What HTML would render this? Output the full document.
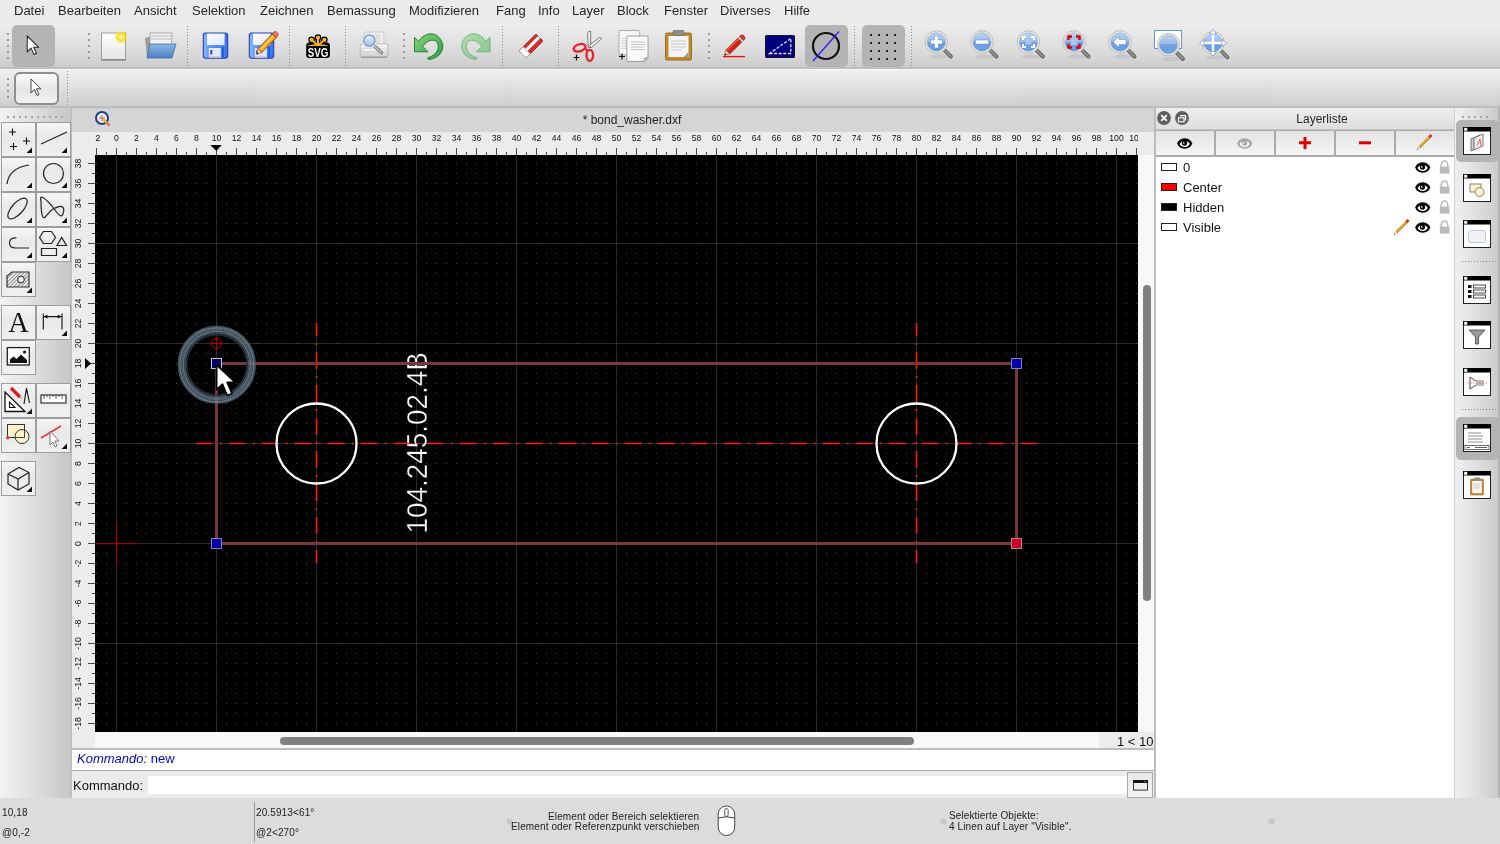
<!DOCTYPE html><html><head><meta charset="utf-8"><style>
html,body{margin:0;padding:0;}
body{width:1500px;height:844px;overflow:hidden;position:relative;background:#ececec;font-family:"Liberation Sans", sans-serif;}
.t{position:absolute;white-space:pre;line-height:1;will-change:transform;}
.b{position:absolute;display:block;}
svg.b{will-change:transform;}
</style></head><body>
<div class="b" style="left:0px;top:0px;width:1500px;height:24px;background:#ebebeb;"></div>
<div class="t" style="left:14.4px;top:4.2px;font-size:13px;color:#262626;">Datei</div>
<div class="t" style="left:57.6px;top:4.2px;font-size:13px;color:#262626;">Bearbeiten</div>
<div class="t" style="left:134.0px;top:4.2px;font-size:13px;color:#262626;">Ansicht</div>
<div class="t" style="left:191.7px;top:4.2px;font-size:13px;color:#262626;">Selektion</div>
<div class="t" style="left:259.6px;top:4.2px;font-size:13px;color:#262626;">Zeichnen</div>
<div class="t" style="left:327.2px;top:4.2px;font-size:13px;color:#262626;">Bemassung</div>
<div class="t" style="left:409.3px;top:4.2px;font-size:13px;color:#262626;">Modifizieren</div>
<div class="t" style="left:495.7px;top:4.2px;font-size:13px;color:#262626;">Fang</div>
<div class="t" style="left:537.6px;top:4.2px;font-size:13px;color:#262626;">Info</div>
<div class="t" style="left:572.0px;top:4.2px;font-size:13px;color:#262626;">Layer</div>
<div class="t" style="left:617.4px;top:4.2px;font-size:13px;color:#262626;">Block</div>
<div class="t" style="left:663.5px;top:4.2px;font-size:13px;color:#262626;">Fenster</div>
<div class="t" style="left:720.2px;top:4.2px;font-size:13px;color:#262626;">Diverses</div>
<div class="t" style="left:784.3px;top:4.2px;font-size:13px;color:#262626;">Hilfe</div>
<div class="b" style="left:0px;top:24px;width:1500px;height:44px;background:linear-gradient(#ededed,#d9d9d9 70%,#cbcbcb);"></div>
<div class="b" style="left:0px;top:67px;width:1500px;height:2px;background:#bebebe;"></div>
<div class="b" style="left:0px;top:69px;width:1500px;height:37px;background:linear-gradient(#f0f0f0,#dcdcdc 60%,#cfcfcf);"></div>
<div class="b" style="left:0px;top:69px;width:1500px;height:1px;background:#f7f7f7;"></div>
<div class="b" style="left:0px;top:106px;width:1500px;height:2px;background:#bdbdbd;"></div>
<svg class="b" style="left:7px;top:33px;" width="2" height="26" viewBox="0 0 2 26"><rect x="0" y="0.0" width="2" height="2" fill="#9a9a9a"/><rect x="0" y="6.0" width="2" height="2" fill="#9a9a9a"/><rect x="0" y="12.0" width="2" height="2" fill="#9a9a9a"/><rect x="0" y="18.0" width="2" height="2" fill="#9a9a9a"/><rect x="0" y="24.0" width="2" height="2" fill="#9a9a9a"/></svg>
<div class="b" style="left:12px;top:25px;width:43px;height:42px;background:#b4b4b4;border-radius:5px;"></div>
<svg class="b" style="left:26px;top:35px;" width="16" height="25" viewBox="0 0 16 25"><g transform="translate(1.2,0.8) scale(0.85)"><path d="M0,0 L0,19 L4.5,14.5 L8,22 L11,20.5 L7.5,13.5 L13.5,13.5 Z" fill="#fff" stroke="#222" stroke-width="1.2" stroke-linejoin="round"/></g></svg>
<svg class="b" style="left:88px;top:33px;" width="2" height="26" viewBox="0 0 2 26"><rect x="0" y="0.0" width="2" height="2" fill="#9a9a9a"/><rect x="0" y="6.0" width="2" height="2" fill="#9a9a9a"/><rect x="0" y="12.0" width="2" height="2" fill="#9a9a9a"/><rect x="0" y="18.0" width="2" height="2" fill="#9a9a9a"/><rect x="0" y="24.0" width="2" height="2" fill="#9a9a9a"/></svg>
<svg class="b" style="left:100px;top:31px;" width="28" height="31" viewBox="0 0 28 31"><defs><linearGradient id="nd" x1="0" y1="0" x2="0" y2="1"><stop offset="0" stop-color="#fff"/><stop offset="1" stop-color="#e4e4e4"/></linearGradient><radialGradient id="sun"><stop offset="0" stop-color="#fffbd0"/><stop offset="0.5" stop-color="#f3e21a"/><stop offset="1" stop-color="#f3e21a" stop-opacity="0"/></radialGradient></defs><rect x="1.5" y="2" width="24" height="27" fill="url(#nd)" stroke="#9c9c9c" stroke-width="1"/><rect x="1.5" y="28" width="24" height="1.5" fill="#888"/><circle cx="21" cy="6" r="7" fill="url(#sun)"/></svg>
<svg class="b" style="left:142px;top:30px;" width="36" height="32" viewBox="0 0 36 32"><defs><linearGradient id="fo" x1="0" y1="0" x2="0" y2="1"><stop offset="0" stop-color="#8fb7e8"/><stop offset="1" stop-color="#4a7fc4"/></linearGradient></defs><path d="M3,8 L12,6 L12,27 L5,27 Z" fill="#9a9a9a"/><path d="M8,3 L30,3 L29,22 L8,22 Z" fill="#f2f2f2" stroke="#9c9c9c" stroke-width="0.8"/><path d="M9,6 L29,6 M9,9 L29,9" stroke="#bbb" stroke-width="1"/><path d="M8,14 L34,14 L30,28 L5,28 Z" fill="url(#fo)" stroke="#3f6fb0" stroke-width="0.8"/></svg>
<svg class="b" style="left:187px;top:26px;" width="1" height="40" viewBox="0 0 1 40"><rect x="0" y="0" width="1" height="1" fill="#8a8a8a"/><rect x="0" y="3" width="1" height="1" fill="#8a8a8a"/><rect x="0" y="6" width="1" height="1" fill="#8a8a8a"/><rect x="0" y="9" width="1" height="1" fill="#8a8a8a"/><rect x="0" y="12" width="1" height="1" fill="#8a8a8a"/><rect x="0" y="15" width="1" height="1" fill="#8a8a8a"/><rect x="0" y="18" width="1" height="1" fill="#8a8a8a"/><rect x="0" y="21" width="1" height="1" fill="#8a8a8a"/><rect x="0" y="24" width="1" height="1" fill="#8a8a8a"/><rect x="0" y="27" width="1" height="1" fill="#8a8a8a"/><rect x="0" y="30" width="1" height="1" fill="#8a8a8a"/><rect x="0" y="33" width="1" height="1" fill="#8a8a8a"/><rect x="0" y="36" width="1" height="1" fill="#8a8a8a"/><rect x="0" y="39" width="1" height="1" fill="#8a8a8a"/></svg>
<svg class="b" style="left:202px;top:32px;" width="28" height="28" viewBox="0 0 28 28"><defs><linearGradient id="sv" x1="0" y1="0" x2="1" y2="0"><stop offset="0" stop-color="#8cbcff"/><stop offset="0.25" stop-color="#5c98f6"/><stop offset="1" stop-color="#3876ee"/></linearGradient><linearGradient id="svl" x1="0" y1="0" x2="1" y2="1"><stop offset="0" stop-color="#fafcff"/><stop offset="1" stop-color="#dfe7fb"/></linearGradient></defs><rect x="1.3" y="1" width="24.4" height="25.2" rx="2.5" fill="url(#sv)" stroke="#2c3da6" stroke-width="1.1"/><rect x="5" y="1.6" width="17.6" height="11.5" fill="url(#svl)"/><rect x="6.8" y="16" width="12" height="9.6" fill="#e4e6f0"/><rect x="6.8" y="24" width="12" height="1.6" fill="#c8cad8"/><rect x="8.3" y="18" width="2" height="4.5" fill="#1f4fd0"/><rect x="20" y="15" width="2" height="10" fill="#1f5fe8"/></svg>
<svg class="b" style="left:248px;top:32px;overflow:visible;" width="32" height="28" viewBox="0 0 32 28"><defs><linearGradient id="sv2" x1="0" y1="0" x2="1" y2="0"><stop offset="0" stop-color="#8cbcff"/><stop offset="0.25" stop-color="#5c98f6"/><stop offset="1" stop-color="#3876ee"/></linearGradient><linearGradient id="svl2" x1="0" y1="0" x2="1" y2="1"><stop offset="0" stop-color="#fafcff"/><stop offset="1" stop-color="#dfe7fb"/></linearGradient></defs><rect x="1.3" y="1" width="24.4" height="25.2" rx="2.5" fill="url(#sv2)" stroke="#2c3da6" stroke-width="1.1"/><rect x="5" y="1.6" width="17.6" height="11.5" fill="url(#svl2)"/><rect x="6.8" y="16" width="12" height="9.6" fill="#e4e6f0"/><rect x="6.8" y="24" width="12" height="1.6" fill="#c8cad8"/><rect x="8.3" y="18" width="2" height="4.5" fill="#1f4fd0"/><rect x="20" y="15" width="2" height="10" fill="#1f5fe8"/><g transform="translate(-1.2,-2.8)"><path d="M11.2,19.5 L25.5,4.6 L29.4,8.4 L15,23.3 Z" fill="#f8a81a" stroke="#9a2a10" stroke-width="0.8" stroke-linejoin="round"/><path d="M13.5,20.5 L27,6.5" stroke="#ffe070" stroke-width="1.2"/><path d="M25.5,4.6 L27.2,2.8 Q28.5,1.8 29.6,2.8 L31,4.2 Q31.8,5.4 30.9,6.6 L29.4,8.4 Z" fill="#f07a5a" stroke="#9a2a10" stroke-width="0.8"/><path d="M11.2,19.5 L9.6,24.6 L15,23.3 Z" fill="#f4e4c0" stroke="#9a2a10" stroke-width="0.6"/><path d="M9.6,24.6 L10.2,22.6 L11.8,24 Z" fill="#333"/></g></svg>
<svg class="b" style="left:289px;top:26px;" width="1" height="40" viewBox="0 0 1 40"><rect x="0" y="0" width="1" height="1" fill="#8a8a8a"/><rect x="0" y="3" width="1" height="1" fill="#8a8a8a"/><rect x="0" y="6" width="1" height="1" fill="#8a8a8a"/><rect x="0" y="9" width="1" height="1" fill="#8a8a8a"/><rect x="0" y="12" width="1" height="1" fill="#8a8a8a"/><rect x="0" y="15" width="1" height="1" fill="#8a8a8a"/><rect x="0" y="18" width="1" height="1" fill="#8a8a8a"/><rect x="0" y="21" width="1" height="1" fill="#8a8a8a"/><rect x="0" y="24" width="1" height="1" fill="#8a8a8a"/><rect x="0" y="27" width="1" height="1" fill="#8a8a8a"/><rect x="0" y="30" width="1" height="1" fill="#8a8a8a"/><rect x="0" y="33" width="1" height="1" fill="#8a8a8a"/><rect x="0" y="36" width="1" height="1" fill="#8a8a8a"/><rect x="0" y="39" width="1" height="1" fill="#8a8a8a"/></svg>
<svg class="b" style="left:300px;top:28px;" width="36" height="36" viewBox="0 0 36 36"><g fill="#000"><circle cx="18" cy="9.6" r="3.3"/><circle cx="11.6" cy="11.8" r="3.3"/><circle cx="24.4" cy="11.8" r="3.3"/></g><path d="M18,9.6 L18,17 M11.6,11.8 L17,17 M24.4,11.8 L19,17" stroke="#000" stroke-width="4"/><rect x="6.2" y="14.6" width="23.7" height="15.3" rx="3" fill="#000"/><g fill="#f8ae2e"><circle cx="18" cy="9.6" r="2.1"/><circle cx="11.6" cy="11.8" r="2.1"/><circle cx="24.4" cy="11.8" r="2.1"/></g><path d="M18,9.6 L18,17 M11.6,11.8 L17.5,17 M24.4,11.8 L18.5,17" stroke="#f8ae2e" stroke-width="2"/><path d="M8,17.4 Q18,15 28,17.4 L28,18 L8,18 Z" fill="#f8ae2e"/><text x="0" y="0" transform="translate(18.1,28.6) scale(0.78,1)" font-family="Liberation Sans" font-weight="bold" font-size="12.5" fill="#fff" text-anchor="middle">SVG</text></svg>
<svg class="b" style="left:345px;top:26px;" width="1" height="40" viewBox="0 0 1 40"><rect x="0" y="0" width="1" height="1" fill="#8a8a8a"/><rect x="0" y="3" width="1" height="1" fill="#8a8a8a"/><rect x="0" y="6" width="1" height="1" fill="#8a8a8a"/><rect x="0" y="9" width="1" height="1" fill="#8a8a8a"/><rect x="0" y="12" width="1" height="1" fill="#8a8a8a"/><rect x="0" y="15" width="1" height="1" fill="#8a8a8a"/><rect x="0" y="18" width="1" height="1" fill="#8a8a8a"/><rect x="0" y="21" width="1" height="1" fill="#8a8a8a"/><rect x="0" y="24" width="1" height="1" fill="#8a8a8a"/><rect x="0" y="27" width="1" height="1" fill="#8a8a8a"/><rect x="0" y="30" width="1" height="1" fill="#8a8a8a"/><rect x="0" y="33" width="1" height="1" fill="#8a8a8a"/><rect x="0" y="36" width="1" height="1" fill="#8a8a8a"/><rect x="0" y="39" width="1" height="1" fill="#8a8a8a"/></svg>
<svg class="b" style="left:354px;top:26px;" width="40" height="40" viewBox="0 0 40 40"><defs><linearGradient id="pr" x1="0" y1="0" x2="0" y2="1"><stop offset="0" stop-color="#fafafa"/><stop offset="1" stop-color="#cfcfcf"/></linearGradient><linearGradient id="pl" x1="0" y1="0" x2="0" y2="1"><stop offset="0" stop-color="#eef4fc"/><stop offset="1" stop-color="#9fbde6"/></linearGradient></defs><rect x="10.2" y="6" width="19.7" height="14" rx="1" fill="#ededed" stroke="#c6c6c6" stroke-width="0.8"/><rect x="13" y="8.5" width="13" height="8" fill="#dedede"/><rect x="6.2" y="17.8" width="27.7" height="13.5" rx="2.5" fill="url(#pr)" stroke="#aaaaaa" stroke-width="0.8"/><rect x="8" y="22.5" width="24" height="2.5" fill="#f6f6f6" stroke="#c8c8c8" stroke-width="0.5"/><rect x="7" y="30.5" width="26" height="1.5" fill="#8a8a8a" opacity="0.6"/><path d="M20.5,20 L27.5,26.8" stroke="#7a7a7a" stroke-width="3.4" stroke-linecap="round"/><path d="M20.5,20 L27.5,26.8" stroke="#c4c4c4" stroke-width="1.6" stroke-linecap="round"/><circle cx="15.4" cy="14.7" r="7.2" fill="#f6f6f6" stroke="#cfcfcf" stroke-width="0.6"/><circle cx="15.4" cy="14.7" r="5.6" fill="url(#pl)" stroke="#5a8ad0" stroke-width="1.1"/></svg>
<svg class="b" style="left:403px;top:33px;" width="2" height="26" viewBox="0 0 2 26"><rect x="0" y="0.0" width="2" height="2" fill="#9a9a9a"/><rect x="0" y="6.0" width="2" height="2" fill="#9a9a9a"/><rect x="0" y="12.0" width="2" height="2" fill="#9a9a9a"/><rect x="0" y="18.0" width="2" height="2" fill="#9a9a9a"/><rect x="0" y="24.0" width="2" height="2" fill="#9a9a9a"/></svg>
<svg class="b" style="left:408px;top:28px;" width="40" height="36" viewBox="0 0 40 36"><defs><linearGradient id="ug" x1="0" y1="0" x2="1" y2="1"><stop offset="0" stop-color="#8ad277"/><stop offset="1" stop-color="#2d9e44"/></linearGradient></defs><path d="M6.5,9.4 L6.5,23.8 L20,23.8 L14.6,18.4 C18,14 22,12 25,12.2 C29,12.5 30.5,16 30.2,19.5 C29.8,24 25,28.5 19.5,30 L20.5,31.5 C28,31 34.5,26 34.8,19 C35,11.5 29,5.8 23,5.8 C18,5.8 13.5,9 10.5,13.2 Z" fill="url(#ug)" stroke="#157a2c" stroke-width="0.9" stroke-linejoin="round"/></svg>
<svg class="b" style="left:455px;top:28px;" width="40" height="36" viewBox="0 0 40 36"><defs><linearGradient id="rg" x1="1" y1="0" x2="0" y2="1"><stop offset="0" stop-color="#b4dea8"/><stop offset="1" stop-color="#84c495"/></linearGradient></defs><g transform="translate(41.5,0) scale(-1,1)"><path d="M6.5,9.4 L6.5,23.8 L20,23.8 L14.6,18.4 C18,14 22,12 25,12.2 C29,12.5 30.5,16 30.2,19.5 C29.8,24 25,28.5 19.5,30 L20.5,31.5 C28,31 34.5,26 34.8,19 C35,11.5 29,5.8 23,5.8 C18,5.8 13.5,9 10.5,13.2 Z" fill="url(#rg)" stroke="#6aad80" stroke-width="0.9" stroke-linejoin="round"/></g></svg>
<svg class="b" style="left:502px;top:26px;" width="1" height="40" viewBox="0 0 1 40"><rect x="0" y="0" width="1" height="1" fill="#8a8a8a"/><rect x="0" y="3" width="1" height="1" fill="#8a8a8a"/><rect x="0" y="6" width="1" height="1" fill="#8a8a8a"/><rect x="0" y="9" width="1" height="1" fill="#8a8a8a"/><rect x="0" y="12" width="1" height="1" fill="#8a8a8a"/><rect x="0" y="15" width="1" height="1" fill="#8a8a8a"/><rect x="0" y="18" width="1" height="1" fill="#8a8a8a"/><rect x="0" y="21" width="1" height="1" fill="#8a8a8a"/><rect x="0" y="24" width="1" height="1" fill="#8a8a8a"/><rect x="0" y="27" width="1" height="1" fill="#8a8a8a"/><rect x="0" y="30" width="1" height="1" fill="#8a8a8a"/><rect x="0" y="33" width="1" height="1" fill="#8a8a8a"/><rect x="0" y="36" width="1" height="1" fill="#8a8a8a"/><rect x="0" y="39" width="1" height="1" fill="#8a8a8a"/></svg>
<svg class="b" style="left:516px;top:32px;" width="30" height="28" viewBox="0 0 30 28"><ellipse cx="15" cy="25" rx="11" ry="2" fill="#d8d8d8"/><g transform="rotate(-45 15 14)"><rect x="3" y="9" width="24" height="10" rx="1.5" fill="#d42c2c" stroke="#8a1a1a" stroke-width="0.8"/><rect x="3" y="12" width="24" height="3" fill="#fff"/><rect x="3" y="9" width="6" height="10" fill="#f4f4f4" stroke="#999" stroke-width="0.6"/></g></svg>
<svg class="b" style="left:558px;top:26px;" width="1" height="40" viewBox="0 0 1 40"><rect x="0" y="0" width="1" height="1" fill="#8a8a8a"/><rect x="0" y="3" width="1" height="1" fill="#8a8a8a"/><rect x="0" y="6" width="1" height="1" fill="#8a8a8a"/><rect x="0" y="9" width="1" height="1" fill="#8a8a8a"/><rect x="0" y="12" width="1" height="1" fill="#8a8a8a"/><rect x="0" y="15" width="1" height="1" fill="#8a8a8a"/><rect x="0" y="18" width="1" height="1" fill="#8a8a8a"/><rect x="0" y="21" width="1" height="1" fill="#8a8a8a"/><rect x="0" y="24" width="1" height="1" fill="#8a8a8a"/><rect x="0" y="27" width="1" height="1" fill="#8a8a8a"/><rect x="0" y="30" width="1" height="1" fill="#8a8a8a"/><rect x="0" y="33" width="1" height="1" fill="#8a8a8a"/><rect x="0" y="36" width="1" height="1" fill="#8a8a8a"/><rect x="0" y="39" width="1" height="1" fill="#8a8a8a"/></svg>
<svg class="b" style="left:571px;top:30px;" width="34" height="32" viewBox="0 0 34 32"><path d="M17.2,17.5 L16.6,3.2 Q17.2,0.9 19.6,1.1 L19.8,17.5 Z" fill="#f4f4f4" stroke="#5a5a5a" stroke-width="0.8"/><path d="M18.6,15.2 L28.6,7.4 Q30.2,7 30.4,8.8 L20.2,17.8 Z" fill="#f4f4f4" stroke="#5a5a5a" stroke-width="0.8"/><ellipse cx="8.6" cy="17.8" rx="6.2" ry="3.5" transform="rotate(-18 8.6 17.8)" fill="none" stroke="#e0262b" stroke-width="2.3"/><ellipse cx="18.8" cy="25.3" rx="3.3" ry="5.5" fill="none" stroke="#e0262b" stroke-width="2.3"/><path d="M14,18.6 L17,21" stroke="#e0262b" stroke-width="2.2"/><path d="M5.5,24.5 L5.5,30.5 M2.5,27.5 L8.5,27.5" stroke="#111" stroke-width="1.2"/></svg>
<svg class="b" style="left:617px;top:29px;" width="33" height="34" viewBox="0 0 33 34"><path d="M2,2.5 Q2,1.5 3,1.5 L21.5,1.5 Q22.7,1.5 22.7,2.7 L22.7,26 L2,26 Z" fill="#f6f6f6" stroke="#9a9a9a" stroke-width="0.8"/><path d="M4.5,9.5 L14,9.5 M4.5,12 L14,12 M4.5,14.5 L14,14.5 M4.5,17 L14,17 M4.5,19.5 L14,19.5" stroke="#cfcfcf" stroke-width="1"/><path d="M9.8,8 Q9.8,7 10.8,7 L30,7 Q31,7 31,8 L31,28.5 L27,32.5 L10.8,32.5 Q9.8,32.5 9.8,31.5 Z" fill="#f8f8f8" stroke="#8c8c8c" stroke-width="0.8"/><path d="M27,32.5 L27.5,28.8 L31,28.5 Z" fill="#c8c8c8" stroke="#8c8c8c" stroke-width="0.6"/><path d="M14,13 L28,13 M14,15.5 L28,15.5 M14,18 L27,18 M14,20.5 L28,20.5" stroke="#c4c4c4" stroke-width="1"/><path d="M5,24.5 L5,30.5 M2,27.5 L8,27.5" stroke="#111" stroke-width="1.2"/></svg>
<svg class="b" style="left:664px;top:29px;" width="30" height="33" viewBox="0 0 30 33"><rect x="1.5" y="4" width="26" height="27" rx="1.5" fill="#c28a2e" stroke="#8a5a10" stroke-width="0.8"/><rect x="4.5" y="7" width="20" height="21" fill="#f4f4f4"/><path d="M7,12 L22,12 M7,15 L22,15 M7,18 L22,18 M7,21 L18,21" stroke="#c9c9c9" stroke-width="1"/><rect x="9" y="1.5" width="11" height="5" rx="1" fill="#8e8e86" stroke="#666" stroke-width="0.6"/><path d="M24.5,23 L24.5,28 L19.5,28 Z" fill="#9c9c9c"/></svg>
<svg class="b" style="left:708px;top:33px;" width="2" height="26" viewBox="0 0 2 26"><rect x="0" y="0.0" width="2" height="2" fill="#9a9a9a"/><rect x="0" y="6.0" width="2" height="2" fill="#9a9a9a"/><rect x="0" y="12.0" width="2" height="2" fill="#9a9a9a"/><rect x="0" y="18.0" width="2" height="2" fill="#9a9a9a"/><rect x="0" y="24.0" width="2" height="2" fill="#9a9a9a"/></svg>
<svg class="b" style="left:716px;top:28px;" width="36" height="34" viewBox="0 0 36 34"><rect x="7" y="27.9" width="22" height="1.4" fill="#ff0a0a"/><g transform="translate(8.4,27.4) rotate(-44.7)"><path d="M0,0 L5,-2.8 L5,2.8 Z" fill="#f0caa0" stroke="#7a4a20" stroke-width="0.5"/><path d="M0,0 L1.9,-1.05 L1.9,1.05 Z" fill="#222"/><rect x="5" y="-2.8" width="17" height="5.6" fill="#d41e1e" stroke="#6a3a10" stroke-width="0.6"/><rect x="5.3" y="-2.5" width="16.5" height="1.7" fill="#e8582c"/><rect x="22" y="-2.8" width="1.9" height="5.6" fill="#cfcfcf"/><path d="M23.9,-2.8 L25.3,-2.8 Q27.7,-2.8 27.7,0 Q27.7,2.8 25.3,2.8 L23.9,2.8 Z" fill="#e83232" stroke="#6a3a10" stroke-width="0.6"/></g></svg>
<svg class="b" style="left:765px;top:35px;" width="30" height="23" viewBox="0 0 30 23"><rect x="0.6" y="0.6" width="28.8" height="21.8" rx="1" fill="#000080" stroke="#141428" stroke-width="1.2"/><path d="M4.5,18.5 L25.8,18.5 L25.8,3.5 Z" fill="none" stroke="#e0e0ff" stroke-width="1.3" stroke-dasharray="3 1.6"/></svg>
<div class="b" style="left:805px;top:25px;width:43px;height:42px;background:#b4b4b4;border-radius:5px;"></div>
<svg class="b" style="left:810px;top:30px;" width="34" height="34" viewBox="0 0 34 34"><circle cx="16" cy="16" r="13" fill="none" stroke="#111" stroke-width="2.2"/><path d="M3,31 L29,1.5" stroke="#2020ff" stroke-width="1.2"/></svg>
<svg class="b" style="left:854px;top:26px;" width="1" height="40" viewBox="0 0 1 40"><rect x="0" y="0" width="1" height="1" fill="#8a8a8a"/><rect x="0" y="3" width="1" height="1" fill="#8a8a8a"/><rect x="0" y="6" width="1" height="1" fill="#8a8a8a"/><rect x="0" y="9" width="1" height="1" fill="#8a8a8a"/><rect x="0" y="12" width="1" height="1" fill="#8a8a8a"/><rect x="0" y="15" width="1" height="1" fill="#8a8a8a"/><rect x="0" y="18" width="1" height="1" fill="#8a8a8a"/><rect x="0" y="21" width="1" height="1" fill="#8a8a8a"/><rect x="0" y="24" width="1" height="1" fill="#8a8a8a"/><rect x="0" y="27" width="1" height="1" fill="#8a8a8a"/><rect x="0" y="30" width="1" height="1" fill="#8a8a8a"/><rect x="0" y="33" width="1" height="1" fill="#8a8a8a"/><rect x="0" y="36" width="1" height="1" fill="#8a8a8a"/><rect x="0" y="39" width="1" height="1" fill="#8a8a8a"/></svg>
<div class="b" style="left:862px;top:25px;width:43px;height:42px;background:#b4b4b4;border-radius:5px;"></div>
<svg class="b" style="left:869px;top:33px;" width="28" height="28" viewBox="0 0 28 28"><rect x="1" y="1" width="2" height="2" fill="#222"/><rect x="1" y="9" width="2" height="2" fill="#222"/><rect x="1" y="17" width="2" height="2" fill="#222"/><rect x="1" y="25" width="2" height="2" fill="#222"/><rect x="9" y="1" width="2" height="2" fill="#222"/><rect x="9" y="9" width="2" height="2" fill="#222"/><rect x="9" y="17" width="2" height="2" fill="#222"/><rect x="9" y="25" width="2" height="2" fill="#222"/><rect x="17" y="1" width="2" height="2" fill="#222"/><rect x="17" y="9" width="2" height="2" fill="#222"/><rect x="17" y="17" width="2" height="2" fill="#222"/><rect x="17" y="25" width="2" height="2" fill="#222"/><rect x="25" y="1" width="2" height="2" fill="#222"/><rect x="25" y="9" width="2" height="2" fill="#222"/><rect x="25" y="17" width="2" height="2" fill="#222"/><rect x="25" y="25" width="2" height="2" fill="#222"/></svg>
<svg class="b" style="left:911px;top:26px;" width="1" height="40" viewBox="0 0 1 40"><rect x="0" y="0" width="1" height="1" fill="#8a8a8a"/><rect x="0" y="3" width="1" height="1" fill="#8a8a8a"/><rect x="0" y="6" width="1" height="1" fill="#8a8a8a"/><rect x="0" y="9" width="1" height="1" fill="#8a8a8a"/><rect x="0" y="12" width="1" height="1" fill="#8a8a8a"/><rect x="0" y="15" width="1" height="1" fill="#8a8a8a"/><rect x="0" y="18" width="1" height="1" fill="#8a8a8a"/><rect x="0" y="21" width="1" height="1" fill="#8a8a8a"/><rect x="0" y="24" width="1" height="1" fill="#8a8a8a"/><rect x="0" y="27" width="1" height="1" fill="#8a8a8a"/><rect x="0" y="30" width="1" height="1" fill="#8a8a8a"/><rect x="0" y="33" width="1" height="1" fill="#8a8a8a"/><rect x="0" y="36" width="1" height="1" fill="#8a8a8a"/><rect x="0" y="39" width="1" height="1" fill="#8a8a8a"/></svg>
<svg class="b" style="left:920px;top:26px;" width="40" height="40" viewBox="0 0 40 40"><defs><linearGradient id="mg16.416" x1="0" y1="0" x2="0" y2="1"><stop offset="0" stop-color="#bcd3f1"/><stop offset="0.47" stop-color="#9bbbe7"/><stop offset="0.53" stop-color="#6f9fe0"/><stop offset="1" stop-color="#66a0e8"/></linearGradient></defs><ellipse cx="19.4" cy="30.5" rx="10" ry="2.2" fill="#000" opacity="0.07"/><path d="M24.7,24.3 L30.9,30.5" stroke="#6a6a6a" stroke-width="4" stroke-linecap="round"/><path d="M24.7,24.3 L30.9,30.5" stroke="#9c9c9c" stroke-width="1.3" stroke-linecap="round"/><circle cx="16.4" cy="16" r="11.2" fill="#ececE6" stroke="#b0b0a6" stroke-width="0.8"/><circle cx="16.4" cy="16" r="9.2" fill="url(#mg16.416)" stroke="#8aa8d0" stroke-width="0.6"/><path d="M10.5,14 L14.5,14 L14.5,10 L18.5,10 L18.5,14 L22.5,14 L22.5,18 L18.5,18 L18.5,22 L14.5,22 L14.5,18 L10.5,18 Z" fill="#fff" stroke="#5a86c4" stroke-width="0.5"/></svg>
<svg class="b" style="left:966px;top:26px;" width="40" height="40" viewBox="0 0 40 40"><defs><linearGradient id="mg1616" x1="0" y1="0" x2="0" y2="1"><stop offset="0" stop-color="#bcd3f1"/><stop offset="0.47" stop-color="#9bbbe7"/><stop offset="0.53" stop-color="#6f9fe0"/><stop offset="1" stop-color="#66a0e8"/></linearGradient></defs><ellipse cx="19" cy="30.5" rx="10" ry="2.2" fill="#000" opacity="0.07"/><path d="M24.3,24.3 L30.5,30.5" stroke="#6a6a6a" stroke-width="4" stroke-linecap="round"/><path d="M24.3,24.3 L30.5,30.5" stroke="#9c9c9c" stroke-width="1.3" stroke-linecap="round"/><circle cx="16" cy="16" r="11.2" fill="#ececE6" stroke="#b0b0a6" stroke-width="0.8"/><circle cx="16" cy="16" r="9.2" fill="url(#mg1616)" stroke="#8aa8d0" stroke-width="0.6"/><rect x="9.5" y="14" width="13" height="4" fill="#fff" stroke="#5a86c4" stroke-width="0.5"/></svg>
<svg class="b" style="left:1012px;top:26px;" width="40" height="40" viewBox="0 0 40 40"><defs><linearGradient id="mg16.416" x1="0" y1="0" x2="0" y2="1"><stop offset="0" stop-color="#bcd3f1"/><stop offset="0.47" stop-color="#9bbbe7"/><stop offset="0.53" stop-color="#6f9fe0"/><stop offset="1" stop-color="#66a0e8"/></linearGradient></defs><ellipse cx="19.4" cy="30.5" rx="10" ry="2.2" fill="#000" opacity="0.07"/><path d="M24.7,24.3 L30.9,30.5" stroke="#6a6a6a" stroke-width="4" stroke-linecap="round"/><path d="M24.7,24.3 L30.9,30.5" stroke="#9c9c9c" stroke-width="1.3" stroke-linecap="round"/><circle cx="16.4" cy="16" r="11.2" fill="#ececE6" stroke="#b0b0a6" stroke-width="0.8"/><circle cx="16.4" cy="16" r="9.2" fill="url(#mg16.416)" stroke="#8aa8d0" stroke-width="0.6"/><path d="M11,14 L11,11 L14,11 M19,11 L22,11 L22,14 M22,18 L22,21 L19,21 M14,21 L11,21 L11,18" fill="none" stroke="#fff" stroke-width="2"/><rect x="13.5" y="13.5" width="6" height="5" fill="#a9c8ee"/></svg>
<svg class="b" style="left:1058px;top:26px;" width="40" height="40" viewBox="0 0 40 40"><defs><linearGradient id="mg1616" x1="0" y1="0" x2="0" y2="1"><stop offset="0" stop-color="#bcd3f1"/><stop offset="0.47" stop-color="#9bbbe7"/><stop offset="0.53" stop-color="#6f9fe0"/><stop offset="1" stop-color="#66a0e8"/></linearGradient></defs><ellipse cx="19" cy="30.5" rx="10" ry="2.2" fill="#000" opacity="0.07"/><path d="M24.3,24.3 L30.5,30.5" stroke="#6a6a6a" stroke-width="4" stroke-linecap="round"/><path d="M24.3,24.3 L30.5,30.5" stroke="#9c9c9c" stroke-width="1.3" stroke-linecap="round"/><circle cx="16" cy="16" r="11.2" fill="#ececE6" stroke="#b0b0a6" stroke-width="0.8"/><circle cx="16" cy="16" r="9.2" fill="url(#mg1616)" stroke="#8aa8d0" stroke-width="0.6"/><path d="M10.5,14 L10.5,10.5 L14,10.5 M18,10.5 L21.5,10.5 L21.5,14 M21.5,18 L21.5,21.5 L18,21.5 M14,21.5 L10.5,21.5 L10.5,18" fill="none" stroke="#e30000" stroke-width="2.4"/><rect x="13" y="13" width="6" height="6" fill="#a9c8ee"/></svg>
<svg class="b" style="left:1104px;top:26px;" width="40" height="40" viewBox="0 0 40 40"><defs><linearGradient id="mg1616" x1="0" y1="0" x2="0" y2="1"><stop offset="0" stop-color="#bcd3f1"/><stop offset="0.47" stop-color="#9bbbe7"/><stop offset="0.53" stop-color="#6f9fe0"/><stop offset="1" stop-color="#66a0e8"/></linearGradient></defs><ellipse cx="19" cy="30.5" rx="10" ry="2.2" fill="#000" opacity="0.07"/><path d="M24.3,24.3 L30.5,30.5" stroke="#6a6a6a" stroke-width="4" stroke-linecap="round"/><path d="M24.3,24.3 L30.5,30.5" stroke="#9c9c9c" stroke-width="1.3" stroke-linecap="round"/><circle cx="16" cy="16" r="11.2" fill="#ececE6" stroke="#b0b0a6" stroke-width="0.8"/><circle cx="16" cy="16" r="9.2" fill="url(#mg1616)" stroke="#8aa8d0" stroke-width="0.6"/><path d="M9,16 L15,10.5 L15,13.5 L22,13.5 L22,18.5 L15,18.5 L15,21.5 Z" fill="#fff" stroke="#5a86c4" stroke-width="0.5"/></svg>
<svg class="b" style="left:1150px;top:26px;" width="40" height="40" viewBox="0 0 40 40"><rect x="4.5" y="4.5" width="27" height="18" fill="#fff" stroke="#6a92cc" stroke-width="1"/><defs><linearGradient id="mg18.518.5" x1="0" y1="0" x2="0" y2="1"><stop offset="0" stop-color="#bcd3f1"/><stop offset="0.47" stop-color="#9bbbe7"/><stop offset="0.53" stop-color="#6f9fe0"/><stop offset="1" stop-color="#66a0e8"/></linearGradient></defs><ellipse cx="21.5" cy="33.0" rx="10" ry="2.2" fill="#000" opacity="0.07"/><path d="M26.8,26.8 L33.0,33.0" stroke="#6a6a6a" stroke-width="4" stroke-linecap="round"/><path d="M26.8,26.8 L33.0,33.0" stroke="#9c9c9c" stroke-width="1.3" stroke-linecap="round"/><circle cx="18.5" cy="18.5" r="11.2" fill="#ececE6" stroke="#b0b0a6" stroke-width="0.8"/><circle cx="18.5" cy="18.5" r="9.2" fill="url(#mg18.518.5)" stroke="#8aa8d0" stroke-width="0.6"/><rect x="10" y="18" width="17" height="3" fill="#7aa5dd" opacity="0.6"/></svg>
<svg class="b" style="left:1196px;top:26px;" width="40" height="40" viewBox="0 0 40 40"><defs><linearGradient id="mg1716.8" x1="0" y1="0" x2="0" y2="1"><stop offset="0" stop-color="#bcd3f1"/><stop offset="0.47" stop-color="#9bbbe7"/><stop offset="0.53" stop-color="#6f9fe0"/><stop offset="1" stop-color="#66a0e8"/></linearGradient></defs><ellipse cx="20" cy="31.3" rx="10" ry="2.2" fill="#000" opacity="0.07"/><path d="M25.3,25.1 L31.5,31.3" stroke="#6a6a6a" stroke-width="4" stroke-linecap="round"/><path d="M25.3,25.1 L31.5,31.3" stroke="#9c9c9c" stroke-width="1.3" stroke-linecap="round"/><circle cx="17" cy="16.8" r="11.2" fill="#ececE6" stroke="#b0b0a6" stroke-width="0.8"/><circle cx="17" cy="16.8" r="9.2" fill="url(#mg1716.8)" stroke="#8aa8d0" stroke-width="0.6"/><path d="M17,4 L17,29 M4.5,17 L29.5,17" stroke="#fff" stroke-width="2.4"/><path d="M13.5,8 L17,3.5 L20.5,8 Z M13.5,25.5 L17,30 L20.5,25.5 Z M8,13.5 L3.5,17 L8,20.5 Z M26,13.5 L30.5,17 L26,20.5 Z" fill="#fff" stroke="#5a86c4" stroke-width="0.6"/></svg>
<svg class="b" style="left:7px;top:78px;" width="2" height="20" viewBox="0 0 2 20"><rect x="0" y="0.0" width="2" height="2" fill="#9a9a9a"/><rect x="0" y="6.0" width="2" height="2" fill="#9a9a9a"/><rect x="0" y="12.0" width="2" height="2" fill="#9a9a9a"/><rect x="0" y="18.0" width="2" height="2" fill="#9a9a9a"/></svg>
<div class="b" style="left:14px;top:72px;width:45px;height:33px;background:linear-gradient(#fafafa,#e6e6e6 55%,#f2f2f2);border:2px solid #8e8e8e;border-radius:6px;box-sizing:border-box;"></div>
<svg class="b" style="left:30px;top:78px;" width="14" height="20" viewBox="0 0 14 20"><path d="M1,1 L1,15 L4.5,11.5 L7,17.5 L9,16.5 L6.5,10.8 L11,10.8 Z" fill="#fff" stroke="#333" stroke-width="0.9" stroke-linejoin="round"/></svg>
<svg class="b" style="left:67px;top:71px;" width="1" height="35" viewBox="0 0 1 35"><rect x="0" y="0" width="1" height="1" fill="#8a8a8a"/><rect x="0" y="3" width="1" height="1" fill="#8a8a8a"/><rect x="0" y="6" width="1" height="1" fill="#8a8a8a"/><rect x="0" y="9" width="1" height="1" fill="#8a8a8a"/><rect x="0" y="12" width="1" height="1" fill="#8a8a8a"/><rect x="0" y="15" width="1" height="1" fill="#8a8a8a"/><rect x="0" y="18" width="1" height="1" fill="#8a8a8a"/><rect x="0" y="21" width="1" height="1" fill="#8a8a8a"/><rect x="0" y="24" width="1" height="1" fill="#8a8a8a"/><rect x="0" y="27" width="1" height="1" fill="#8a8a8a"/><rect x="0" y="30" width="1" height="1" fill="#8a8a8a"/><rect x="0" y="33" width="1" height="1" fill="#8a8a8a"/></svg>
<div class="b" style="left:0px;top:108px;width:71px;height:690px;background:linear-gradient(90deg,#f3f3f3 0%,#e8e8e8 25%,#d8d8d8 62%,#c6c6c6 100%);"></div>
<div class="b" style="left:71px;top:108px;width:1px;height:690px;background:#bdbdbd;"></div>
<svg class="b" style="left:7px;top:116px;" width="58" height="3" viewBox="0 0 58 3"><rect x="0" y="0" width="2" height="2" fill="#a4a4a4"/><rect x="6" y="0" width="2" height="2" fill="#a4a4a4"/><rect x="12" y="0" width="2" height="2" fill="#a4a4a4"/><rect x="18" y="0" width="2" height="2" fill="#a4a4a4"/><rect x="24" y="0" width="2" height="2" fill="#a4a4a4"/><rect x="30" y="0" width="2" height="2" fill="#a4a4a4"/><rect x="36" y="0" width="2" height="2" fill="#a4a4a4"/><rect x="42" y="0" width="2" height="2" fill="#a4a4a4"/><rect x="48" y="0" width="2" height="2" fill="#a4a4a4"/><rect x="54" y="0" width="2" height="2" fill="#a4a4a4"/></svg>
<div class="b" style="left:1px;top:122px;width:35px;height:35px;background:linear-gradient(#f6f6f6,#e9e9e9 40%,#f0f0f0);border:1px solid #9d9d9d;box-sizing:border-box;"></div>
<svg class="b" style="left:1px;top:122px;" width="35" height="35" viewBox="0 0 35 35"><path d="M11.5,6.5 L11.5,13.5 M8,10 L15,10 M25.5,15.5 L25.5,22.5 M22,19 L29,19 M12.5,21 L12.5,28 M9,24.5 L16,24.5" stroke="#111" stroke-width="1.1"/><path d="M31,25.5 L31,31 L25.5,31 Z" fill="#111"/></svg>
<div class="b" style="left:36px;top:122px;width:35px;height:35px;background:linear-gradient(#f6f6f6,#e9e9e9 40%,#f0f0f0);border:1px solid #9d9d9d;box-sizing:border-box;"></div>
<svg class="b" style="left:36px;top:122px;" width="35" height="35" viewBox="0 0 35 35"><path d="M5,22 L31,10" stroke="#222" fill="none" stroke-width="1.2"/><path d="M31,25.5 L31,31 L25.5,31 Z" fill="#111"/></svg>
<div class="b" style="left:1px;top:157px;width:35px;height:35px;background:linear-gradient(#f6f6f6,#e9e9e9 40%,#f0f0f0);border:1px solid #9d9d9d;box-sizing:border-box;"></div>
<svg class="b" style="left:1px;top:157px;" width="35" height="35" viewBox="0 0 35 35"><path d="M6,27 Q8,11 28,8" stroke="#222" fill="none" stroke-width="1.2" stroke-width="1.5"/><path d="M31,25.5 L31,31 L25.5,31 Z" fill="#111"/></svg>
<div class="b" style="left:36px;top:157px;width:35px;height:35px;background:linear-gradient(#f6f6f6,#e9e9e9 40%,#f0f0f0);border:1px solid #9d9d9d;box-sizing:border-box;"></div>
<svg class="b" style="left:36px;top:157px;" width="35" height="35" viewBox="0 0 35 35"><circle cx="17.5" cy="16.5" r="10" stroke="#222" fill="none" stroke-width="1.2" stroke-width="1.4"/><path d="M31,25.5 L31,31 L25.5,31 Z" fill="#111"/></svg>
<div class="b" style="left:1px;top:192px;width:35px;height:35px;background:linear-gradient(#f6f6f6,#e9e9e9 40%,#f0f0f0);border:1px solid #9d9d9d;box-sizing:border-box;"></div>
<svg class="b" style="left:1px;top:192px;" width="35" height="35" viewBox="0 0 35 35"><ellipse cx="16.5" cy="16.5" rx="13" ry="5.6" transform="rotate(-48 16.5 16.5)" stroke="#222" fill="none" stroke-width="1.2" stroke-width="1.3"/><path d="M31,25.5 L31,31 L25.5,31 Z" fill="#111"/></svg>
<div class="b" style="left:36px;top:192px;width:35px;height:35px;background:linear-gradient(#f6f6f6,#e9e9e9 40%,#f0f0f0);border:1px solid #9d9d9d;box-sizing:border-box;"></div>
<svg class="b" style="left:36px;top:192px;" width="35" height="35" viewBox="0 0 35 35"><path d="M5,9 C3,2 8,5 16,14 C22,22 25,27 27,22 C30,13 24,13 17,17 C11,21 9,28 7,25 C5,22 5,15 5,9 Z" stroke="#222" fill="none" stroke-width="1.2" stroke-width="1.3"/><path d="M31,25.5 L31,31 L25.5,31 Z" fill="#111"/></svg>
<div class="b" style="left:1px;top:227px;width:35px;height:35px;background:linear-gradient(#f6f6f6,#e9e9e9 40%,#f0f0f0);border:1px solid #9d9d9d;box-sizing:border-box;"></div>
<svg class="b" style="left:1px;top:227px;" width="35" height="35" viewBox="0 0 35 35"><path d="M15.5,11 Q8.5,10.5 8.5,16 Q8.5,21 14.5,21 L28,21" stroke="#222" fill="none" stroke-width="1.2" stroke-width="1.3"/><path d="M31,25.5 L31,31 L25.5,31 Z" fill="#111"/></svg>
<div class="b" style="left:36px;top:227px;width:35px;height:35px;background:linear-gradient(#f6f6f6,#e9e9e9 40%,#f0f0f0);border:1px solid #9d9d9d;box-sizing:border-box;"></div>
<svg class="b" style="left:36px;top:227px;" width="35" height="35" viewBox="0 0 35 35"><path d="M7.5,4.5 L15.5,4.5 L19.5,10.5 L15.5,16.5 L7.5,16.5 L3.5,10.5 Z M21,18.5 L30.5,18.5 L25.7,10.5 Z M5.5,21.5 L20.5,21.5 L20.5,28.5 L5.5,28.5 Z" stroke="#222" fill="none" stroke-width="1.2" stroke-width="1.15"/><path d="M31,25.5 L31,31 L25.5,31 Z" fill="#111"/></svg>
<div class="b" style="left:1px;top:262px;width:35px;height:35px;background:linear-gradient(#f6f6f6,#e9e9e9 40%,#f0f0f0);border:1px solid #9d9d9d;box-sizing:border-box;"></div>
<svg class="b" style="left:1px;top:262px;" width="35" height="35" viewBox="0 0 35 35"><defs><pattern id="hp" width="2.6" height="2.6" patternUnits="userSpaceOnUse" patternTransform="rotate(45)"><rect width="0.9" height="2.6" fill="#8a8a8a"/></pattern></defs><path d="M6,14 L11,10 L28,10 L28,25 L6,25 Z" fill="url(#hp)" stroke="#333" stroke-width="1.2"/><circle cx="20" cy="17.5" r="3.2" fill="#f0f0f0" stroke="#333" stroke-width="1.1"/><path d="M31,25.5 L31,31 L25.5,31 Z" fill="#111"/></svg>
<div class="b" style="left:1px;top:305px;width:35px;height:35px;background:linear-gradient(#f6f6f6,#e9e9e9 40%,#f0f0f0);border:1px solid #9d9d9d;box-sizing:border-box;"></div>
<svg class="b" style="left:1px;top:305px;" width="35" height="35" viewBox="0 0 35 35"><text x="17.5" y="26.8" font-family="Liberation Serif" font-size="28.5" fill="#111" text-anchor="middle">A</text></svg>
<div class="b" style="left:36px;top:305px;width:35px;height:35px;background:linear-gradient(#f6f6f6,#e9e9e9 40%,#f0f0f0);border:1px solid #9d9d9d;box-sizing:border-box;"></div>
<svg class="b" style="left:36px;top:305px;" width="35" height="35" viewBox="0 0 35 35"><path d="M7.3,8.5 L7.3,24.5 M26,8.5 L26,24.5 M8,11.6 L25.3,11.6" stroke="#1a1a1a" fill="none" stroke-width="1.15"/><path d="M7.6,11.6 L11.5,9.8 L11.5,13.4 Z M25.7,11.6 L21.8,9.8 L21.8,13.4 Z" fill="#111"/><path d="M31,25.5 L31,31 L25.5,31 Z" fill="#111"/></svg>
<div class="b" style="left:1px;top:340px;width:35px;height:35px;background:linear-gradient(#f6f6f6,#e9e9e9 40%,#f0f0f0);border:1px solid #9d9d9d;box-sizing:border-box;"></div>
<svg class="b" style="left:1px;top:340px;" width="35" height="35" viewBox="0 0 35 35"><rect x="6.3" y="7.6" width="22" height="17.4" fill="#fff" stroke="#222" stroke-width="1.3"/><path d="M9,23 L9,19.5 L12.5,16.5 L15.5,19 L20,14.5 L26,20 L26,23 Z" fill="#111"/><circle cx="23.5" cy="12" r="1.6" fill="#111"/></svg>
<div class="b" style="left:1px;top:383px;width:35px;height:35px;background:linear-gradient(#f6f6f6,#e9e9e9 40%,#f0f0f0);border:1px solid #9d9d9d;box-sizing:border-box;"></div>
<svg class="b" style="left:1px;top:383px;" width="35" height="35" viewBox="0 0 35 35"><path d="M4,28.5 L24,28.5 L4,9 Z" fill="#fff" stroke="#111" stroke-width="1.3"/><path d="M8.5,24.5 L14,24.5 L8.5,19 Z" fill="none" stroke="#111" stroke-width="1.1"/><path d="M10,5 L19,14" stroke="#d42020" stroke-width="3.2"/><path d="M19,14 L20.5,15.5" stroke="#e0b070" stroke-width="2"/><path d="M25.5,5 L23,21 M25.5,5 L28.5,20 M24.5,9 L26.5,9" stroke="#111" stroke-width="1.1"/><path d="M31,25.5 L31,31 L25.5,31 Z" fill="#111"/></svg>
<div class="b" style="left:36px;top:383px;width:35px;height:35px;background:linear-gradient(#f6f6f6,#e9e9e9 40%,#f0f0f0);border:1px solid #9d9d9d;box-sizing:border-box;"></div>
<svg class="b" style="left:36px;top:383px;" width="35" height="35" viewBox="0 0 35 35"><rect x="5" y="12" width="25" height="8" fill="#fff" stroke="#333" stroke-width="1.2"/><path d="M8,12 L8,16 M11,12 L11,14 M14,12 L14,16 M17,12 L17,14 M20,12 L20,16 M23,12 L23,14 M26,12 L26,16" stroke="#333" stroke-width="0.8"/></svg>
<div class="b" style="left:1px;top:418px;width:35px;height:35px;background:linear-gradient(#f6f6f6,#e9e9e9 40%,#f0f0f0);border:1px solid #9d9d9d;box-sizing:border-box;"></div>
<svg class="b" style="left:1px;top:418px;" width="35" height="35" viewBox="0 0 35 35"><rect x="6.5" y="6.5" width="17" height="13" fill="#fdf2c8" stroke="#333" stroke-width="1"/><circle cx="21" cy="18.5" r="7" fill="#fdf2c8" fill-opacity="0.85" stroke="#333" stroke-width="1"/><path d="M14,19.5 L23.5,19.5 L23.5,11.5" fill="none" stroke="#333" stroke-width="0.9"/><circle cx="6.7" cy="19.8" r="1.7" fill="#e33"/></svg>
<div class="b" style="left:36px;top:418px;width:35px;height:35px;background:linear-gradient(#f6f6f6,#e9e9e9 40%,#f0f0f0);border:1px solid #9d9d9d;box-sizing:border-box;"></div>
<svg class="b" style="left:36px;top:418px;" width="35" height="35" viewBox="0 0 35 35"><path d="M5,20 L25,8" stroke="#e33" stroke-width="1.5"/><path d="M14,13 L14,27 L17,24 L19,29 L21,28 L19,23 L23,23 Z" fill="#fff" stroke="#666" stroke-width="0.9"/><path d="M31,25.5 L31,31 L25.5,31 Z" fill="#111"/></svg>
<div class="b" style="left:1px;top:461px;width:35px;height:35px;background:linear-gradient(#f6f6f6,#e9e9e9 40%,#f0f0f0);border:1px solid #9d9d9d;box-sizing:border-box;"></div>
<svg class="b" style="left:1px;top:461px;" width="35" height="35" viewBox="0 0 35 35"><path d="M7,13 L18,6.5 L28,11.5 L28,23 L17,29 L7,23 Z M7,13 L17,18 L28,11.5 M17,18 L17,29" stroke="#222" fill="none" stroke-width="1.2" stroke-width="1.15"/><path d="M31,25.5 L31,31 L25.5,31 Z" fill="#111"/></svg>
<div class="b" style="left:72px;top:108px;width:1082px;height:24px;background:#d5d5d5;"></div>
<div class="b" style="left:72px;top:108px;width:1082px;height:1px;background:#cacaca;"></div>
<svg class="b" style="left:95px;top:111px;" width="16" height="16" viewBox="0 0 16 16"><circle cx="7" cy="7" r="6" fill="#e8eef8" stroke="#1f3f8f" stroke-width="2"/><path d="M4,7 L10,7 M7,4 L7,10" stroke="#c33" stroke-width="0.8"/><path d="M7,7 L13,13" stroke="#f0b020" stroke-width="2.4"/><path d="M12,12 L14.5,14.5" stroke="#e55" stroke-width="2"/></svg>
<div class="t" style="left:432.0px;width:400px;text-align:center;top:113.5px;font-size:12px;color:#1e1e1e;">* bond_washer.dxf</div>
<div class="b" style="left:72px;top:132px;width:1066px;height:23px;background:#ececec;"></div>
<div class="b" style="left:1138px;top:132px;width:16px;height:23px;background:#ececec;"></div>
<div class="b" style="left:72px;top:155px;width:23px;height:593px;background:#ececec;"></div>
<svg class="b" style="left:95px;top:131px;overflow:hidden;" width="1043" height="24" viewBox="0 0 1043 24"><rect x="1" y="17" width="1" height="7" fill="#4a4a4a"/><rect x="11" y="21" width="1" height="3" fill="#4a4a4a"/><rect x="21" y="17" width="1" height="7" fill="#4a4a4a"/><rect x="31" y="21" width="1" height="3" fill="#4a4a4a"/><rect x="41" y="17" width="1" height="7" fill="#4a4a4a"/><rect x="51" y="21" width="1" height="3" fill="#4a4a4a"/><rect x="61" y="17" width="1" height="7" fill="#4a4a4a"/><rect x="71" y="21" width="1" height="3" fill="#4a4a4a"/><rect x="81" y="17" width="1" height="7" fill="#4a4a4a"/><rect x="91" y="21" width="1" height="3" fill="#4a4a4a"/><rect x="101" y="17" width="1" height="7" fill="#4a4a4a"/><rect x="111" y="21" width="1" height="3" fill="#4a4a4a"/><rect x="121" y="17" width="1" height="7" fill="#4a4a4a"/><rect x="131" y="21" width="1" height="3" fill="#4a4a4a"/><rect x="141" y="17" width="1" height="7" fill="#4a4a4a"/><rect x="151" y="21" width="1" height="3" fill="#4a4a4a"/><rect x="161" y="17" width="1" height="7" fill="#4a4a4a"/><rect x="171" y="21" width="1" height="3" fill="#4a4a4a"/><rect x="181" y="17" width="1" height="7" fill="#4a4a4a"/><rect x="191" y="21" width="1" height="3" fill="#4a4a4a"/><rect x="201" y="17" width="1" height="7" fill="#4a4a4a"/><rect x="211" y="21" width="1" height="3" fill="#4a4a4a"/><rect x="221" y="17" width="1" height="7" fill="#4a4a4a"/><rect x="231" y="21" width="1" height="3" fill="#4a4a4a"/><rect x="241" y="17" width="1" height="7" fill="#4a4a4a"/><rect x="251" y="21" width="1" height="3" fill="#4a4a4a"/><rect x="261" y="17" width="1" height="7" fill="#4a4a4a"/><rect x="271" y="21" width="1" height="3" fill="#4a4a4a"/><rect x="281" y="17" width="1" height="7" fill="#4a4a4a"/><rect x="291" y="21" width="1" height="3" fill="#4a4a4a"/><rect x="301" y="17" width="1" height="7" fill="#4a4a4a"/><rect x="311" y="21" width="1" height="3" fill="#4a4a4a"/><rect x="321" y="17" width="1" height="7" fill="#4a4a4a"/><rect x="331" y="21" width="1" height="3" fill="#4a4a4a"/><rect x="341" y="17" width="1" height="7" fill="#4a4a4a"/><rect x="351" y="21" width="1" height="3" fill="#4a4a4a"/><rect x="361" y="17" width="1" height="7" fill="#4a4a4a"/><rect x="371" y="21" width="1" height="3" fill="#4a4a4a"/><rect x="381" y="17" width="1" height="7" fill="#4a4a4a"/><rect x="391" y="21" width="1" height="3" fill="#4a4a4a"/><rect x="401" y="17" width="1" height="7" fill="#4a4a4a"/><rect x="411" y="21" width="1" height="3" fill="#4a4a4a"/><rect x="421" y="17" width="1" height="7" fill="#4a4a4a"/><rect x="431" y="21" width="1" height="3" fill="#4a4a4a"/><rect x="441" y="17" width="1" height="7" fill="#4a4a4a"/><rect x="451" y="21" width="1" height="3" fill="#4a4a4a"/><rect x="461" y="17" width="1" height="7" fill="#4a4a4a"/><rect x="471" y="21" width="1" height="3" fill="#4a4a4a"/><rect x="481" y="17" width="1" height="7" fill="#4a4a4a"/><rect x="491" y="21" width="1" height="3" fill="#4a4a4a"/><rect x="501" y="17" width="1" height="7" fill="#4a4a4a"/><rect x="511" y="21" width="1" height="3" fill="#4a4a4a"/><rect x="521" y="17" width="1" height="7" fill="#4a4a4a"/><rect x="531" y="21" width="1" height="3" fill="#4a4a4a"/><rect x="541" y="17" width="1" height="7" fill="#4a4a4a"/><rect x="551" y="21" width="1" height="3" fill="#4a4a4a"/><rect x="561" y="17" width="1" height="7" fill="#4a4a4a"/><rect x="571" y="21" width="1" height="3" fill="#4a4a4a"/><rect x="581" y="17" width="1" height="7" fill="#4a4a4a"/><rect x="591" y="21" width="1" height="3" fill="#4a4a4a"/><rect x="601" y="17" width="1" height="7" fill="#4a4a4a"/><rect x="611" y="21" width="1" height="3" fill="#4a4a4a"/><rect x="621" y="17" width="1" height="7" fill="#4a4a4a"/><rect x="631" y="21" width="1" height="3" fill="#4a4a4a"/><rect x="641" y="17" width="1" height="7" fill="#4a4a4a"/><rect x="651" y="21" width="1" height="3" fill="#4a4a4a"/><rect x="661" y="17" width="1" height="7" fill="#4a4a4a"/><rect x="671" y="21" width="1" height="3" fill="#4a4a4a"/><rect x="681" y="17" width="1" height="7" fill="#4a4a4a"/><rect x="691" y="21" width="1" height="3" fill="#4a4a4a"/><rect x="701" y="17" width="1" height="7" fill="#4a4a4a"/><rect x="711" y="21" width="1" height="3" fill="#4a4a4a"/><rect x="721" y="17" width="1" height="7" fill="#4a4a4a"/><rect x="731" y="21" width="1" height="3" fill="#4a4a4a"/><rect x="741" y="17" width="1" height="7" fill="#4a4a4a"/><rect x="751" y="21" width="1" height="3" fill="#4a4a4a"/><rect x="761" y="17" width="1" height="7" fill="#4a4a4a"/><rect x="771" y="21" width="1" height="3" fill="#4a4a4a"/><rect x="781" y="17" width="1" height="7" fill="#4a4a4a"/><rect x="791" y="21" width="1" height="3" fill="#4a4a4a"/><rect x="801" y="17" width="1" height="7" fill="#4a4a4a"/><rect x="811" y="21" width="1" height="3" fill="#4a4a4a"/><rect x="821" y="17" width="1" height="7" fill="#4a4a4a"/><rect x="831" y="21" width="1" height="3" fill="#4a4a4a"/><rect x="841" y="17" width="1" height="7" fill="#4a4a4a"/><rect x="851" y="21" width="1" height="3" fill="#4a4a4a"/><rect x="861" y="17" width="1" height="7" fill="#4a4a4a"/><rect x="871" y="21" width="1" height="3" fill="#4a4a4a"/><rect x="881" y="17" width="1" height="7" fill="#4a4a4a"/><rect x="891" y="21" width="1" height="3" fill="#4a4a4a"/><rect x="901" y="17" width="1" height="7" fill="#4a4a4a"/><rect x="911" y="21" width="1" height="3" fill="#4a4a4a"/><rect x="921" y="17" width="1" height="7" fill="#4a4a4a"/><rect x="931" y="21" width="1" height="3" fill="#4a4a4a"/><rect x="941" y="17" width="1" height="7" fill="#4a4a4a"/><rect x="951" y="21" width="1" height="3" fill="#4a4a4a"/><rect x="961" y="17" width="1" height="7" fill="#4a4a4a"/><rect x="971" y="21" width="1" height="3" fill="#4a4a4a"/><rect x="981" y="17" width="1" height="7" fill="#4a4a4a"/><rect x="991" y="21" width="1" height="3" fill="#4a4a4a"/><rect x="1001" y="17" width="1" height="7" fill="#4a4a4a"/><rect x="1011" y="21" width="1" height="3" fill="#4a4a4a"/><rect x="1021" y="17" width="1" height="7" fill="#4a4a4a"/><rect x="1031" y="21" width="1" height="3" fill="#4a4a4a"/><rect x="1041" y="17" width="1" height="7" fill="#4a4a4a"/><g font-family="Liberation Sans" font-size="9.4" fill="#111"><text transform="translate(1.5,9.9) scale(0.915,1)" text-anchor="middle">-2</text><text transform="translate(21.5,9.9) scale(0.915,1)" text-anchor="middle">0</text><text transform="translate(41.5,9.9) scale(0.915,1)" text-anchor="middle">2</text><text transform="translate(61.5,9.9) scale(0.915,1)" text-anchor="middle">4</text><text transform="translate(81.5,9.9) scale(0.915,1)" text-anchor="middle">6</text><text transform="translate(101.5,9.9) scale(0.915,1)" text-anchor="middle">8</text><text transform="translate(121.5,9.9) scale(0.915,1)" text-anchor="middle">10</text><text transform="translate(141.5,9.9) scale(0.915,1)" text-anchor="middle">12</text><text transform="translate(161.5,9.9) scale(0.915,1)" text-anchor="middle">14</text><text transform="translate(181.5,9.9) scale(0.915,1)" text-anchor="middle">16</text><text transform="translate(201.5,9.9) scale(0.915,1)" text-anchor="middle">18</text><text transform="translate(221.5,9.9) scale(0.915,1)" text-anchor="middle">20</text><text transform="translate(241.5,9.9) scale(0.915,1)" text-anchor="middle">22</text><text transform="translate(261.5,9.9) scale(0.915,1)" text-anchor="middle">24</text><text transform="translate(281.5,9.9) scale(0.915,1)" text-anchor="middle">26</text><text transform="translate(301.5,9.9) scale(0.915,1)" text-anchor="middle">28</text><text transform="translate(321.5,9.9) scale(0.915,1)" text-anchor="middle">30</text><text transform="translate(341.5,9.9) scale(0.915,1)" text-anchor="middle">32</text><text transform="translate(361.5,9.9) scale(0.915,1)" text-anchor="middle">34</text><text transform="translate(381.5,9.9) scale(0.915,1)" text-anchor="middle">36</text><text transform="translate(401.5,9.9) scale(0.915,1)" text-anchor="middle">38</text><text transform="translate(421.5,9.9) scale(0.915,1)" text-anchor="middle">40</text><text transform="translate(441.5,9.9) scale(0.915,1)" text-anchor="middle">42</text><text transform="translate(461.5,9.9) scale(0.915,1)" text-anchor="middle">44</text><text transform="translate(481.5,9.9) scale(0.915,1)" text-anchor="middle">46</text><text transform="translate(501.5,9.9) scale(0.915,1)" text-anchor="middle">48</text><text transform="translate(521.5,9.9) scale(0.915,1)" text-anchor="middle">50</text><text transform="translate(541.5,9.9) scale(0.915,1)" text-anchor="middle">52</text><text transform="translate(561.5,9.9) scale(0.915,1)" text-anchor="middle">54</text><text transform="translate(581.5,9.9) scale(0.915,1)" text-anchor="middle">56</text><text transform="translate(601.5,9.9) scale(0.915,1)" text-anchor="middle">58</text><text transform="translate(621.5,9.9) scale(0.915,1)" text-anchor="middle">60</text><text transform="translate(641.5,9.9) scale(0.915,1)" text-anchor="middle">62</text><text transform="translate(661.5,9.9) scale(0.915,1)" text-anchor="middle">64</text><text transform="translate(681.5,9.9) scale(0.915,1)" text-anchor="middle">66</text><text transform="translate(701.5,9.9) scale(0.915,1)" text-anchor="middle">68</text><text transform="translate(721.5,9.9) scale(0.915,1)" text-anchor="middle">70</text><text transform="translate(741.5,9.9) scale(0.915,1)" text-anchor="middle">72</text><text transform="translate(761.5,9.9) scale(0.915,1)" text-anchor="middle">74</text><text transform="translate(781.5,9.9) scale(0.915,1)" text-anchor="middle">76</text><text transform="translate(801.5,9.9) scale(0.915,1)" text-anchor="middle">78</text><text transform="translate(821.5,9.9) scale(0.915,1)" text-anchor="middle">80</text><text transform="translate(841.5,9.9) scale(0.915,1)" text-anchor="middle">82</text><text transform="translate(861.5,9.9) scale(0.915,1)" text-anchor="middle">84</text><text transform="translate(881.5,9.9) scale(0.915,1)" text-anchor="middle">86</text><text transform="translate(901.5,9.9) scale(0.915,1)" text-anchor="middle">88</text><text transform="translate(921.5,9.9) scale(0.915,1)" text-anchor="middle">90</text><text transform="translate(941.5,9.9) scale(0.915,1)" text-anchor="middle">92</text><text transform="translate(961.5,9.9) scale(0.915,1)" text-anchor="middle">94</text><text transform="translate(981.5,9.9) scale(0.915,1)" text-anchor="middle">96</text><text transform="translate(1001.5,9.9) scale(0.915,1)" text-anchor="middle">98</text><text transform="translate(1021.5,9.9) scale(0.915,1)" text-anchor="middle">100</text><text transform="translate(1041.5,9.9) scale(0.915,1)" text-anchor="middle">102</text></g><path d="M115.3,14 L126.7,14 L121.3,20 Z" fill="#000"/></svg>
<svg class="b" style="left:72px;top:155px;overflow:hidden;" width="23" height="577" viewBox="0 0 23 577"><rect x="16" y="568" width="7" height="1" fill="#4a4a4a"/><rect x="20" y="558" width="3" height="1" fill="#4a4a4a"/><rect x="16" y="548" width="7" height="1" fill="#4a4a4a"/><rect x="20" y="538" width="3" height="1" fill="#4a4a4a"/><rect x="16" y="528" width="7" height="1" fill="#4a4a4a"/><rect x="20" y="518" width="3" height="1" fill="#4a4a4a"/><rect x="16" y="508" width="7" height="1" fill="#4a4a4a"/><rect x="20" y="498" width="3" height="1" fill="#4a4a4a"/><rect x="16" y="488" width="7" height="1" fill="#4a4a4a"/><rect x="20" y="478" width="3" height="1" fill="#4a4a4a"/><rect x="16" y="468" width="7" height="1" fill="#4a4a4a"/><rect x="20" y="458" width="3" height="1" fill="#4a4a4a"/><rect x="16" y="448" width="7" height="1" fill="#4a4a4a"/><rect x="20" y="438" width="3" height="1" fill="#4a4a4a"/><rect x="16" y="428" width="7" height="1" fill="#4a4a4a"/><rect x="20" y="418" width="3" height="1" fill="#4a4a4a"/><rect x="16" y="408" width="7" height="1" fill="#4a4a4a"/><rect x="20" y="398" width="3" height="1" fill="#4a4a4a"/><rect x="16" y="388" width="7" height="1" fill="#4a4a4a"/><rect x="20" y="378" width="3" height="1" fill="#4a4a4a"/><rect x="16" y="368" width="7" height="1" fill="#4a4a4a"/><rect x="20" y="358" width="3" height="1" fill="#4a4a4a"/><rect x="16" y="348" width="7" height="1" fill="#4a4a4a"/><rect x="20" y="338" width="3" height="1" fill="#4a4a4a"/><rect x="16" y="328" width="7" height="1" fill="#4a4a4a"/><rect x="20" y="318" width="3" height="1" fill="#4a4a4a"/><rect x="16" y="308" width="7" height="1" fill="#4a4a4a"/><rect x="20" y="298" width="3" height="1" fill="#4a4a4a"/><rect x="16" y="288" width="7" height="1" fill="#4a4a4a"/><rect x="20" y="278" width="3" height="1" fill="#4a4a4a"/><rect x="16" y="268" width="7" height="1" fill="#4a4a4a"/><rect x="20" y="258" width="3" height="1" fill="#4a4a4a"/><rect x="16" y="248" width="7" height="1" fill="#4a4a4a"/><rect x="20" y="238" width="3" height="1" fill="#4a4a4a"/><rect x="16" y="228" width="7" height="1" fill="#4a4a4a"/><rect x="20" y="218" width="3" height="1" fill="#4a4a4a"/><rect x="16" y="208" width="7" height="1" fill="#4a4a4a"/><rect x="20" y="198" width="3" height="1" fill="#4a4a4a"/><rect x="16" y="188" width="7" height="1" fill="#4a4a4a"/><rect x="20" y="178" width="3" height="1" fill="#4a4a4a"/><rect x="16" y="168" width="7" height="1" fill="#4a4a4a"/><rect x="20" y="158" width="3" height="1" fill="#4a4a4a"/><rect x="16" y="148" width="7" height="1" fill="#4a4a4a"/><rect x="20" y="138" width="3" height="1" fill="#4a4a4a"/><rect x="16" y="128" width="7" height="1" fill="#4a4a4a"/><rect x="20" y="118" width="3" height="1" fill="#4a4a4a"/><rect x="16" y="108" width="7" height="1" fill="#4a4a4a"/><rect x="20" y="98" width="3" height="1" fill="#4a4a4a"/><rect x="16" y="88" width="7" height="1" fill="#4a4a4a"/><rect x="20" y="78" width="3" height="1" fill="#4a4a4a"/><rect x="16" y="68" width="7" height="1" fill="#4a4a4a"/><rect x="20" y="58" width="3" height="1" fill="#4a4a4a"/><rect x="16" y="48" width="7" height="1" fill="#4a4a4a"/><rect x="20" y="38" width="3" height="1" fill="#4a4a4a"/><rect x="16" y="28" width="7" height="1" fill="#4a4a4a"/><rect x="20" y="18" width="3" height="1" fill="#4a4a4a"/><rect x="16" y="8" width="7" height="1" fill="#4a4a4a"/><g font-family="Liberation Sans" font-size="9.4" fill="#111"><text transform="translate(9.4,568.5) rotate(-90) scale(0.915,1)" x="0" y="0" text-anchor="middle">-18</text><text transform="translate(9.4,548.5) rotate(-90) scale(0.915,1)" x="0" y="0" text-anchor="middle">-16</text><text transform="translate(9.4,528.5) rotate(-90) scale(0.915,1)" x="0" y="0" text-anchor="middle">-14</text><text transform="translate(9.4,508.5) rotate(-90) scale(0.915,1)" x="0" y="0" text-anchor="middle">-12</text><text transform="translate(9.4,488.5) rotate(-90) scale(0.915,1)" x="0" y="0" text-anchor="middle">-10</text><text transform="translate(9.4,468.5) rotate(-90) scale(0.915,1)" x="0" y="0" text-anchor="middle">-8</text><text transform="translate(9.4,448.5) rotate(-90) scale(0.915,1)" x="0" y="0" text-anchor="middle">-6</text><text transform="translate(9.4,428.5) rotate(-90) scale(0.915,1)" x="0" y="0" text-anchor="middle">-4</text><text transform="translate(9.4,408.5) rotate(-90) scale(0.915,1)" x="0" y="0" text-anchor="middle">-2</text><text transform="translate(9.4,388.5) rotate(-90) scale(0.915,1)" x="0" y="0" text-anchor="middle">0</text><text transform="translate(9.4,368.5) rotate(-90) scale(0.915,1)" x="0" y="0" text-anchor="middle">2</text><text transform="translate(9.4,348.5) rotate(-90) scale(0.915,1)" x="0" y="0" text-anchor="middle">4</text><text transform="translate(9.4,328.5) rotate(-90) scale(0.915,1)" x="0" y="0" text-anchor="middle">6</text><text transform="translate(9.4,308.5) rotate(-90) scale(0.915,1)" x="0" y="0" text-anchor="middle">8</text><text transform="translate(9.4,288.5) rotate(-90) scale(0.915,1)" x="0" y="0" text-anchor="middle">10</text><text transform="translate(9.4,268.5) rotate(-90) scale(0.915,1)" x="0" y="0" text-anchor="middle">12</text><text transform="translate(9.4,248.5) rotate(-90) scale(0.915,1)" x="0" y="0" text-anchor="middle">14</text><text transform="translate(9.4,228.5) rotate(-90) scale(0.915,1)" x="0" y="0" text-anchor="middle">16</text><text transform="translate(9.4,208.5) rotate(-90) scale(0.915,1)" x="0" y="0" text-anchor="middle">18</text><text transform="translate(9.4,188.5) rotate(-90) scale(0.915,1)" x="0" y="0" text-anchor="middle">20</text><text transform="translate(9.4,168.5) rotate(-90) scale(0.915,1)" x="0" y="0" text-anchor="middle">22</text><text transform="translate(9.4,148.5) rotate(-90) scale(0.915,1)" x="0" y="0" text-anchor="middle">24</text><text transform="translate(9.4,128.5) rotate(-90) scale(0.915,1)" x="0" y="0" text-anchor="middle">26</text><text transform="translate(9.4,108.5) rotate(-90) scale(0.915,1)" x="0" y="0" text-anchor="middle">28</text><text transform="translate(9.4,88.5) rotate(-90) scale(0.915,1)" x="0" y="0" text-anchor="middle">30</text><text transform="translate(9.4,68.5) rotate(-90) scale(0.915,1)" x="0" y="0" text-anchor="middle">32</text><text transform="translate(9.4,48.5) rotate(-90) scale(0.915,1)" x="0" y="0" text-anchor="middle">34</text><text transform="translate(9.4,28.5) rotate(-90) scale(0.915,1)" x="0" y="0" text-anchor="middle">36</text><text transform="translate(9.4,8.5) rotate(-90) scale(0.915,1)" x="0" y="0" text-anchor="middle">38</text></g><path d="M13,203 L13,214 L19,208.5 Z" fill="#000"/></svg>
<svg class="b" style="left:95px;top:155px;overflow:hidden;" width="1043" height="577" viewBox="0 0 1043 577"><defs><pattern id="gd" width="10" height="10" patternUnits="userSpaceOnUse"><rect x="1" y="8" width="1" height="1" fill="#474747"/></pattern><radialGradient id="ring" cx="0.5" cy="0.5" r="0.5"><stop offset="0.68" stop-color="#5d7383" stop-opacity="0"/><stop offset="0.76" stop-color="#5d7383" stop-opacity="0.55"/><stop offset="0.84" stop-color="#6f8595" stop-opacity="0.7"/><stop offset="0.9" stop-color="#8096a5" stop-opacity="0.9"/><stop offset="0.96" stop-color="#657b8a" stop-opacity="0.75"/><stop offset="1" stop-color="#657b8a" stop-opacity="0"/></radialGradient></defs><rect width="1043" height="577" fill="#000"/><rect x="21" y="0" width="1" height="577" fill="#282828"/><rect x="121" y="0" width="1" height="577" fill="#282828"/><rect x="221" y="0" width="1" height="577" fill="#282828"/><rect x="321" y="0" width="1" height="577" fill="#282828"/><rect x="421" y="0" width="1" height="577" fill="#282828"/><rect x="521" y="0" width="1" height="577" fill="#282828"/><rect x="621" y="0" width="1" height="577" fill="#282828"/><rect x="721" y="0" width="1" height="577" fill="#282828"/><rect x="821" y="0" width="1" height="577" fill="#282828"/><rect x="921" y="0" width="1" height="577" fill="#282828"/><rect x="1021" y="0" width="1" height="577" fill="#282828"/><rect x="0" y="88" width="1043" height="1" fill="#282828"/><rect x="0" y="188" width="1043" height="1" fill="#282828"/><rect x="0" y="288" width="1043" height="1" fill="#282828"/><rect x="0" y="388" width="1043" height="1" fill="#282828"/><rect x="0" y="488" width="1043" height="1" fill="#282828"/><rect width="1043" height="577" fill="url(#gd)"/><rect x="0" y="388" width="42" height="1.2" fill="#a80000"/><rect x="21" y="368" width="1.2" height="41" fill="#a80000"/><text transform="translate(331.8,378.5) rotate(-90) scale(0.93,1)" font-family="Liberation Sans" font-size="30" fill="#fff" stroke="#000" stroke-width="0.4">104.245.02.4B</text><path d="M100.7,288.5 L942.5,288.5" stroke="#ff1a1a" stroke-width="1.6" fill="none" stroke-dasharray="17 7 2 7"/><path d="M221.5,168 L221.5,408" stroke="#ff1a1a" stroke-width="1.6" fill="none" stroke-dasharray="17 7 2 7" stroke-dashoffset="4"/><path d="M821.5,168 L821.5,408" stroke="#ff1a1a" stroke-width="1.6" fill="none" stroke-dasharray="17 7 2 7" stroke-dashoffset="4"/><circle cx="221.5" cy="288.5" r="40" fill="none" stroke="#fff" stroke-width="2.3"/><circle cx="821.5" cy="288.5" r="40" fill="none" stroke="#fff" stroke-width="2.3"/><path d="M121.5,208.5 L921.5,208.5 L921.5,388.5 L121.5,388.5 Z" fill="none" stroke="#7c3838" stroke-width="2.9"/><rect x="116.5" y="203.5" width="10" height="10" fill="#00005e" stroke="#c8c8d8" stroke-width="1"/><rect x="116.5" y="383.5" width="10" height="10" fill="#0000a8" stroke="#8080c0" stroke-width="1"/><rect x="916.5" y="203.5" width="10" height="10" fill="#0000a8" stroke="#8080c0" stroke-width="1"/><rect x="916.5" y="383.5" width="10" height="10" fill="#c8002a" stroke="#c08080" stroke-width="1"/><g fill="none" stroke-width="1.7" opacity="0.88"><circle cx="121.8" cy="209.8" r="38.4" stroke="#485762"/><circle cx="121.8" cy="209.8" r="37" stroke="#6f8595"/><circle cx="121.8" cy="209.8" r="35.2" stroke="#5b6d7a"/><circle cx="121.8" cy="209.8" r="33.5" stroke="#6b8090"/><circle cx="121.8" cy="209.8" r="31.8" stroke="#4a5a66"/><circle cx="121.8" cy="209.8" r="30.2" stroke="#2a333a"/></g><circle cx="121.5" cy="188.5" r="5" fill="none" stroke="#c00000" stroke-width="0.9"/><path d="M115.5,188.5 L127.5,188.5 M121.5,182.5 L121.5,194.5" stroke="#c00000" stroke-width="0.9"/><g transform="translate(121.6,209.8) scale(1.18)"><path d="M0,0 L0,21 L5,16.5 L9,26 L13,24.3 L9,15 L16,15 Z" fill="#fff" stroke="#000" stroke-width="1.5" stroke-linejoin="round"/></g></svg>
<div class="b" style="left:1138px;top:155px;width:16px;height:577px;background:#f8f8f8;"></div>
<div class="b" style="left:1143px;top:285px;width:8px;height:316px;background:#808080;border-radius:4px;"></div>
<div class="b" style="left:95px;top:732px;width:1059px;height:16px;background:#f8f8f8;"></div>
<div class="b" style="left:280px;top:737px;width:634px;height:8px;background:#808080;border-radius:4px;"></div>
<div class="b" style="left:1099px;top:732px;width:55px;height:16px;background:#ececec;"></div>
<div class="t" style="right:346.0px;top:734.5px;font-size:13px;color:#111;">1 &lt; 10</div>
<div class="b" style="left:72px;top:748px;width:1082px;height:2px;background:#bdbdbd;"></div>
<div class="b" style="left:72px;top:750px;width:1082px;height:20px;background:#fff;"></div>
<div class="t" style="left:77px;top:751.6px;font-size:13px;color:#0606c4;"><i>Kommando:</i> new</div>
<div class="b" style="left:72px;top:770px;width:1082px;height:1px;background:#ababab;"></div>
<div class="b" style="left:72px;top:771px;width:1082px;height:27px;background:#ebebeb;"></div>
<div class="t" style="left:73.0px;top:778.6px;font-size:13px;color:#111;">Kommando:</div>
<div class="b" style="left:148px;top:776px;width:979px;height:18px;background:#fff;"></div>
<div class="b" style="left:1127px;top:772px;width:26px;height:26px;background:linear-gradient(#e8e8e8,#f4f4f4);border:1px solid #a8a8a8;box-sizing:border-box;"></div>
<svg class="b" style="left:1133px;top:780px;" width="15" height="11" viewBox="0 0 15 11"><rect x="0.5" y="0.5" width="14" height="9.6" fill="#eee" stroke="#333" stroke-width="1"/><rect x="0" y="0" width="15" height="3" fill="#111"/><rect x="11.5" y="1" width="1" height="1" fill="#ccc"/></svg>
<div class="b" style="left:1154px;top:108px;width:2px;height:690px;background:#bcbcbc;"></div>
<div class="b" style="left:1156px;top:108px;width:299px;height:22px;background:linear-gradient(#ededed,#dedede);"></div>
<div class="b" style="left:1156px;top:129px;width:299px;height:1px;background:#c4c4c4;"></div>
<svg class="b" style="left:1156px;top:110px;" width="36" height="17" viewBox="0 0 36 17"><circle cx="8" cy="8" r="6.9" fill="#5e5e5e"/><path d="M5.2,5.2 L10.8,10.8 M10.8,5.2 L5.2,10.8" stroke="#fff" stroke-width="1.7"/><circle cx="26" cy="8" r="6.9" fill="#5e5e5e"/><path d="M24.6,6.6 L24.6,5.6 L29.6,5.6 L29.6,10 L28.6,10" fill="none" stroke="#fff" stroke-width="1.1"/><rect x="22.4" y="7.8" width="5.6" height="4" fill="#5e5e5e" stroke="#fff" stroke-width="1.1"/></svg>
<div class="t" style="left:1122.0px;width:400px;text-align:center;top:112.8px;font-size:12px;color:#262626;">Layerliste</div>
<div class="b" style="left:1156px;top:130px;width:299px;height:27px;background:#ababab;"></div>
<div class="b" style="left:1156px;top:131px;width:58px;height:24px;background:linear-gradient(#e3e3e3,#f5f5f5);"></div>
<div class="b" style="left:1216px;top:131px;width:58px;height:24px;background:linear-gradient(#e3e3e3,#f5f5f5);"></div>
<div class="b" style="left:1276px;top:131px;width:58px;height:24px;background:linear-gradient(#e3e3e3,#f5f5f5);"></div>
<div class="b" style="left:1336px;top:131px;width:58px;height:24px;background:linear-gradient(#e3e3e3,#f5f5f5);"></div>
<div class="b" style="left:1396px;top:131px;width:58px;height:24px;background:linear-gradient(#e3e3e3,#f5f5f5);"></div>
<svg class="b" style="left:1174px;top:137px;" width="22" height="13" viewBox="0 0 22 13"><g transform="translate(3.2,0.5)"><path d="M0,6 Q1,1.5 7.5,0.8 Q14,1.5 15,6 Q13.5,11 7.5,11.2 Q1.5,11 0,6 Z" fill="#000"/><path d="M2.4,6.6 Q4,3.6 7.5,3.5 Q11,3.6 12.6,6.6 Q11,9.6 7.5,9.6 Q4,9.6 2.4,6.6 Z" fill="#fff"/><circle cx="7.3" cy="5.6" r="2.7" fill="#000"/><circle cx="6.6" cy="5.4" r="0.8" fill="#fff"/></g></svg>
<svg class="b" style="left:1234px;top:137px;" width="22" height="13" viewBox="0 0 22 13"><g transform="translate(3.2,0.5)"><path d="M0,6 Q1,1.5 7.5,0.8 Q14,1.5 15,6 Q13.5,11 7.5,11.2 Q1.5,11 0,6 Z" fill="#a8a8a8"/><path d="M2.4,6.6 Q4,3.6 7.5,3.5 Q11,3.6 12.6,6.6 Q11,9.6 7.5,9.6 Q4,9.6 2.4,6.6 Z" fill="#fff"/><circle cx="7.3" cy="5.6" r="2.7" fill="#a8a8a8"/><circle cx="6.6" cy="5.4" r="0.8" fill="#fff"/></g></svg>
<svg class="b" style="left:1297px;top:135px;" width="16" height="16" viewBox="0 0 16 16"><path d="M8,2 L8,14 M2,7.8 L14,7.8" stroke="#e00000" stroke-width="3"/></svg>
<svg class="b" style="left:1357px;top:135px;" width="16" height="16" viewBox="0 0 16 16"><path d="M2,7.8 L14,7.8" stroke="#e00000" stroke-width="3"/></svg>
<svg class="b" style="left:1416px;top:134px;overflow:visible;" width="17" height="17" viewBox="0 0 17 17"><path d="M3.2,13.3 L13.6,2.9" stroke="#e3a83c" stroke-width="2.8"/><path d="M3.9,14 L14.3,3.6" stroke="#a8701a" stroke-width="0.7"/><path d="M13.2,3.3 L15.6,0.9" stroke="#e02a2a" stroke-width="2.8"/><path d="M0.8,15.7 L2.0,12.3 L4.2,14.5 Z" fill="#f2d2a0"/><path d="M0.8,15.7 L1.3,14.2 L2.3,15.2 Z" fill="#333"/></svg>
<div class="b" style="left:1156px;top:157px;width:298px;height:641px;background:#fff;"></div>
<div class="b" style="left:1454px;top:108px;width:1px;height:690px;background:#d0d0d0;"></div>
<div class="b" style="left:1161px;top:163px;width:16px;height:8px;background:#fff;border:1px solid #222;box-sizing:border-box;"></div>
<div class="t" style="left:1183.0px;top:160.6px;font-size:13px;color:#111;">0</div>
<svg class="b" style="left:1412px;top:161px;" width="22" height="13" viewBox="0 0 22 13"><g transform="translate(3.2,0.5)"><path d="M0,6 Q1,1.5 7.5,0.8 Q14,1.5 15,6 Q13.5,11 7.5,11.2 Q1.5,11 0,6 Z" fill="#000"/><path d="M2.4,6.6 Q4,3.6 7.5,3.5 Q11,3.6 12.6,6.6 Q11,9.6 7.5,9.6 Q4,9.6 2.4,6.6 Z" fill="#fff"/><circle cx="7.3" cy="5.6" r="2.7" fill="#000"/><circle cx="6.6" cy="5.4" r="0.8" fill="#fff"/></g></svg>
<svg class="b" style="left:1439px;top:160px;" width="12" height="15" viewBox="0 0 12 15"><path d="M2.3,7 L2.3,4.8 A3.2,3.9 0 0 1 8.7,4.8 L8.7,7" fill="none" stroke="#b9b9b9" stroke-width="1.5"/><rect x="0.8" y="6.6" width="9.6" height="7" fill="#b9b9b9"/></svg>
<div class="b" style="left:1161px;top:183px;width:16px;height:8px;background:#ff0000;border:1px solid #222;box-sizing:border-box;"></div>
<div class="t" style="left:1183.0px;top:180.6px;font-size:13px;color:#111;">Center</div>
<svg class="b" style="left:1412px;top:181px;" width="22" height="13" viewBox="0 0 22 13"><g transform="translate(3.2,0.5)"><path d="M0,6 Q1,1.5 7.5,0.8 Q14,1.5 15,6 Q13.5,11 7.5,11.2 Q1.5,11 0,6 Z" fill="#000"/><path d="M2.4,6.6 Q4,3.6 7.5,3.5 Q11,3.6 12.6,6.6 Q11,9.6 7.5,9.6 Q4,9.6 2.4,6.6 Z" fill="#fff"/><circle cx="7.3" cy="5.6" r="2.7" fill="#000"/><circle cx="6.6" cy="5.4" r="0.8" fill="#fff"/></g></svg>
<svg class="b" style="left:1439px;top:180px;" width="12" height="15" viewBox="0 0 12 15"><path d="M2.3,7 L2.3,4.8 A3.2,3.9 0 0 1 8.7,4.8 L8.7,7" fill="none" stroke="#b9b9b9" stroke-width="1.5"/><rect x="0.8" y="6.6" width="9.6" height="7" fill="#b9b9b9"/></svg>
<div class="b" style="left:1161px;top:203px;width:16px;height:8px;background:#000;border:1px solid #222;box-sizing:border-box;"></div>
<div class="t" style="left:1183.0px;top:200.6px;font-size:13px;color:#111;">Hidden</div>
<svg class="b" style="left:1412px;top:201px;" width="22" height="13" viewBox="0 0 22 13"><g transform="translate(3.2,0.5)"><path d="M0,6 Q1,1.5 7.5,0.8 Q14,1.5 15,6 Q13.5,11 7.5,11.2 Q1.5,11 0,6 Z" fill="#000"/><path d="M2.4,6.6 Q4,3.6 7.5,3.5 Q11,3.6 12.6,6.6 Q11,9.6 7.5,9.6 Q4,9.6 2.4,6.6 Z" fill="#fff"/><circle cx="7.3" cy="5.6" r="2.7" fill="#000"/><circle cx="6.6" cy="5.4" r="0.8" fill="#fff"/></g></svg>
<svg class="b" style="left:1439px;top:200px;" width="12" height="15" viewBox="0 0 12 15"><path d="M2.3,7 L2.3,4.8 A3.2,3.9 0 0 1 8.7,4.8 L8.7,7" fill="none" stroke="#b9b9b9" stroke-width="1.5"/><rect x="0.8" y="6.6" width="9.6" height="7" fill="#b9b9b9"/></svg>
<div class="b" style="left:1161px;top:223px;width:16px;height:8px;background:#fff;border:1px solid #222;box-sizing:border-box;"></div>
<div class="t" style="left:1183.0px;top:220.6px;font-size:13px;color:#111;">Visible</div>
<svg class="b" style="left:1412px;top:221px;" width="22" height="13" viewBox="0 0 22 13"><g transform="translate(3.2,0.5)"><path d="M0,6 Q1,1.5 7.5,0.8 Q14,1.5 15,6 Q13.5,11 7.5,11.2 Q1.5,11 0,6 Z" fill="#000"/><path d="M2.4,6.6 Q4,3.6 7.5,3.5 Q11,3.6 12.6,6.6 Q11,9.6 7.5,9.6 Q4,9.6 2.4,6.6 Z" fill="#fff"/><circle cx="7.3" cy="5.6" r="2.7" fill="#000"/><circle cx="6.6" cy="5.4" r="0.8" fill="#fff"/></g></svg>
<svg class="b" style="left:1439px;top:220px;" width="12" height="15" viewBox="0 0 12 15"><path d="M2.3,7 L2.3,4.8 A3.2,3.9 0 0 1 8.7,4.8 L8.7,7" fill="none" stroke="#b9b9b9" stroke-width="1.5"/><rect x="0.8" y="6.6" width="9.6" height="7" fill="#b9b9b9"/></svg>
<svg class="b" style="left:1393px;top:219px;overflow:visible;" width="17" height="17" viewBox="0 0 17 17"><path d="M3.2,13.3 L13.6,2.9" stroke="#e3a83c" stroke-width="2.8"/><path d="M3.9,14 L14.3,3.6" stroke="#a8701a" stroke-width="0.7"/><path d="M13.2,3.3 L15.6,0.9" stroke="#e02a2a" stroke-width="2.8"/><path d="M0.8,15.7 L2.0,12.3 L4.2,14.5 Z" fill="#f2d2a0"/><path d="M0.8,15.7 L1.3,14.2 L2.3,15.2 Z" fill="#333"/></svg>
<div class="b" style="left:1455px;top:108px;width:45px;height:690px;background:linear-gradient(90deg,#f0f0f0,#dedede 50%,#c9c9c9);"></div>
<div class="b" style="left:1498px;top:108px;width:2px;height:690px;background:#b4b4b4;"></div>
<svg class="b" style="left:1462px;top:116px;" width="30" height="3" viewBox="0 0 30 3"><rect x="0" y="0" width="2" height="2" fill="#a4a4a4"/><rect x="6" y="0" width="2" height="2" fill="#a4a4a4"/><rect x="12" y="0" width="2" height="2" fill="#a4a4a4"/><rect x="18" y="0" width="2" height="2" fill="#a4a4a4"/><rect x="24" y="0" width="2" height="2" fill="#a4a4a4"/></svg>
<div class="b" style="left:1456px;top:120px;width:43px;height:42px;background:#b4b4b4;border-radius:5px;"></div>
<div class="b" style="left:1456px;top:417px;width:43px;height:43px;background:#b4b4b4;border-radius:5px;"></div>
<svg class="b" style="left:1463px;top:127px;" width="28" height="28" viewBox="0 0 28 28"><rect x="0.5" y="0.5" width="27" height="27" fill="#fff" stroke="#222" stroke-width="1"/><rect x="0" y="0" width="28" height="4.5" fill="#000"/><rect x="1.2" y="0.8" width="3" height="3" fill="#fff"/><path d="M8,12 L17,8 L17,20 L8,24 Z" fill="#ccc" stroke="#555" stroke-width="0.8"/><path d="M11,11 L20,7 L20,19 L11,23 Z" fill="#eee" stroke="#555" stroke-width="0.8"/><path d="M14,19 L17,12 L18,19" fill="none" stroke="#e33" stroke-width="0.8"/></svg>
<svg class="b" style="left:1463px;top:174px;" width="28" height="28" viewBox="0 0 28 28"><rect x="0.5" y="0.5" width="27" height="27" fill="#fff" stroke="#222" stroke-width="1"/><rect x="0" y="0" width="28" height="4.5" fill="#000"/><rect x="1.2" y="0.8" width="3" height="3" fill="#fff"/><rect x="7" y="10" width="11" height="8" fill="#fdf2c8" stroke="#666" stroke-width="0.8"/><circle cx="16.5" cy="18" r="4.5" fill="#fdf2c8" stroke="#666" stroke-width="0.8"/></svg>
<svg class="b" style="left:1463px;top:220px;" width="28" height="28" viewBox="0 0 28 28"><rect x="0.5" y="0.5" width="27" height="27" fill="#fff" stroke="#222" stroke-width="1"/><rect x="0" y="0" width="28" height="4.5" fill="#000"/><rect x="1.2" y="0.8" width="3" height="3" fill="#fff"/><rect x="5.5" y="10.5" width="17" height="12" rx="2" fill="#f2f2f2" stroke="#b8c8e0" stroke-width="1"/></svg>
<svg class="b" style="left:1462px;top:261px;" width="36" height="2" viewBox="0 0 36 2"><rect x="0" y="0" width="1" height="1" fill="#888"/><rect x="3" y="0" width="1" height="1" fill="#888"/><rect x="6" y="0" width="1" height="1" fill="#888"/><rect x="9" y="0" width="1" height="1" fill="#888"/><rect x="12" y="0" width="1" height="1" fill="#888"/><rect x="15" y="0" width="1" height="1" fill="#888"/><rect x="18" y="0" width="1" height="1" fill="#888"/><rect x="21" y="0" width="1" height="1" fill="#888"/><rect x="24" y="0" width="1" height="1" fill="#888"/><rect x="27" y="0" width="1" height="1" fill="#888"/><rect x="30" y="0" width="1" height="1" fill="#888"/><rect x="33" y="0" width="1" height="1" fill="#888"/></svg>
<svg class="b" style="left:1463px;top:276px;" width="28" height="28" viewBox="0 0 28 28"><rect x="0.5" y="0.5" width="27" height="27" fill="#fff" stroke="#222" stroke-width="1"/><rect x="0" y="0" width="28" height="4.5" fill="#000"/><rect x="1.2" y="0.8" width="3" height="3" fill="#fff"/><rect x="5" y="9" width="3.5" height="3" fill="#111"/><rect x="10.5" y="9" width="12" height="3" fill="none" stroke="#222" stroke-width="0.8"/><rect x="5" y="14" width="3.5" height="3" fill="#111"/><rect x="10.5" y="14" width="12" height="3" fill="none" stroke="#222" stroke-width="0.8"/><rect x="5" y="19" width="3.5" height="3" fill="#111"/><rect x="10.5" y="19" width="12" height="3" fill="none" stroke="#222" stroke-width="0.8"/></svg>
<svg class="b" style="left:1463px;top:321px;" width="28" height="28" viewBox="0 0 28 28"><rect x="0.5" y="0.5" width="27" height="27" fill="#fff" stroke="#222" stroke-width="1"/><rect x="0" y="0" width="28" height="4.5" fill="#000"/><rect x="1.2" y="0.8" width="3" height="3" fill="#fff"/><path d="M6,9 L22,9 L15.5,16 L15.5,23 L12.5,23 L12.5,16 Z" fill="#999" stroke="#444" stroke-width="0.8"/></svg>
<svg class="b" style="left:1463px;top:368px;" width="28" height="28" viewBox="0 0 28 28"><rect x="0.5" y="0.5" width="27" height="27" fill="#fff" stroke="#222" stroke-width="1"/><rect x="0" y="0" width="28" height="4.5" fill="#000"/><rect x="1.2" y="0.8" width="3" height="3" fill="#fff"/><path d="M7,9 L7,21 L13,17 L20,17 L20,13 L13,13 Z" fill="#fff" stroke="#333" stroke-width="0.9"/><rect x="13" y="12" width="8" height="6" fill="#bbb"/><path d="M4,15 L25,15" stroke="#e55" stroke-width="0.6" stroke-dasharray="2 1"/></svg>
<svg class="b" style="left:1462px;top:409px;" width="36" height="2" viewBox="0 0 36 2"><rect x="0" y="0" width="1" height="1" fill="#888"/><rect x="3" y="0" width="1" height="1" fill="#888"/><rect x="6" y="0" width="1" height="1" fill="#888"/><rect x="9" y="0" width="1" height="1" fill="#888"/><rect x="12" y="0" width="1" height="1" fill="#888"/><rect x="15" y="0" width="1" height="1" fill="#888"/><rect x="18" y="0" width="1" height="1" fill="#888"/><rect x="21" y="0" width="1" height="1" fill="#888"/><rect x="24" y="0" width="1" height="1" fill="#888"/><rect x="27" y="0" width="1" height="1" fill="#888"/><rect x="30" y="0" width="1" height="1" fill="#888"/><rect x="33" y="0" width="1" height="1" fill="#888"/></svg>
<svg class="b" style="left:1463px;top:424px;" width="28" height="28" viewBox="0 0 28 28"><rect x="0.5" y="0.5" width="27" height="27" fill="#fff" stroke="#222" stroke-width="1"/><rect x="0" y="0" width="28" height="4.5" fill="#000"/><rect x="1.2" y="0.8" width="3" height="3" fill="#fff"/><path d="M5,9 L18,9 M5,12 L20,12 M5,15 L19,15 M5,18 L20,18" stroke="#777" stroke-width="0.8"/><rect x="2" y="21.5" width="24" height="4" fill="none" stroke="#333" stroke-width="0.7"/><path d="M4,23.5 L7,23.5 M12,23.5 L24,23.5" stroke="#333" stroke-width="0.8"/></svg>
<svg class="b" style="left:1463px;top:471px;" width="28" height="28" viewBox="0 0 28 28"><rect x="0.5" y="0.5" width="27" height="27" fill="#fff" stroke="#222" stroke-width="1"/><rect x="0" y="0" width="28" height="4.5" fill="#000"/><rect x="1.2" y="0.8" width="3" height="3" fill="#fff"/><rect x="7.5" y="8" width="13" height="16" rx="1" fill="#c28a2e" stroke="#8a5a10" stroke-width="0.5"/><rect x="9.2" y="10" width="9.6" height="12.2" fill="#f6f6f6"/><path d="M10.5,13 L17.5,13 M10.5,15 L17.5,15 M10.5,17 L16.5,17" stroke="#bbb" stroke-width="0.7"/><rect x="11" y="6.5" width="6" height="3" rx="0.6" fill="#8e8e86"/></svg>
<div class="b" style="left:0px;top:798px;width:1500px;height:46px;background:#dcdcdc;"></div>
<div class="t" style="left:2.0px;top:807.5px;font-size:10px;color:#222;letter-spacing:0.12px;">10,18</div>
<div class="t" style="left:2.0px;top:827.5px;font-size:10px;color:#222;letter-spacing:0.12px;">@0,-2</div>
<div class="b" style="left:254px;top:802px;width:1px;height:40px;background:#9a9a9a;"></div>
<div class="t" style="left:256.0px;top:807.5px;font-size:10px;color:#222;letter-spacing:0.12px;">20.5913&lt;61°</div>
<div class="t" style="left:256.0px;top:827.5px;font-size:10px;color:#222;letter-spacing:0.12px;">@2&lt;270°</div>
<svg class="b" style="left:506px;top:818px;" width="7" height="7" viewBox="0 0 7 7"><circle cx="3.5" cy="3.5" r="3" fill="#c6c6c6"/></svg>
<div class="t" style="right:800.5px;top:811.5px;font-size:10px;color:#222;letter-spacing:0.12px;">Element oder Bereich selektieren</div>
<div class="t" style="right:800.5px;top:822.2px;font-size:10px;color:#222;letter-spacing:0.12px;">Element oder Referenzpunkt verschieben</div>
<svg class="b" style="left:717px;top:805px;" width="20" height="32" viewBox="0 0 20 32"><rect x="1.2" y="1" width="16.5" height="29.5" rx="8.2" fill="#fff" stroke="#333" stroke-width="0.9"/><path d="M1.2,13 Q9.5,10.5 17.7,13" fill="none" stroke="#333" stroke-width="0.9"/><rect x="7.7" y="3.5" width="3.5" height="8" rx="1.75" fill="none" stroke="#333" stroke-width="0.8"/></svg>
<svg class="b" style="left:940px;top:818px;" width="7" height="7" viewBox="0 0 7 7"><circle cx="3.5" cy="3.5" r="3" fill="#c6c6c6"/></svg>
<div class="t" style="left:949.0px;top:810.8px;font-size:10px;color:#222;letter-spacing:0.12px;">Selektierte Objekte:</div>
<div class="t" style="left:949.0px;top:822.2px;font-size:10px;color:#222;letter-spacing:0.12px;">4 Linen auf Layer "Visible".</div>
<svg class="b" style="left:1268px;top:818px;" width="7" height="7" viewBox="0 0 7 7"><circle cx="3.5" cy="3.5" r="3" fill="#c6c6c6"/></svg>
</body></html>
